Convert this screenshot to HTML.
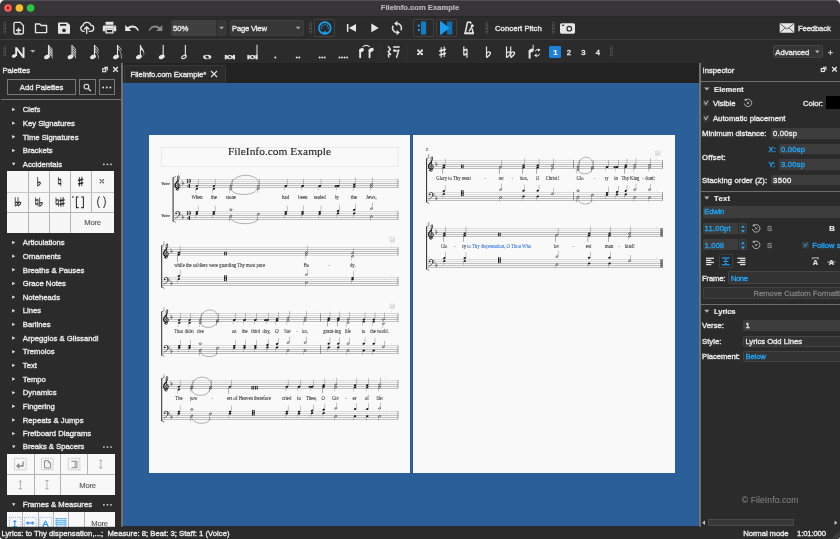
<!DOCTYPE html>
<html lang="en"><head><meta charset="utf-8"><title>FileInfo.com Example</title>
<style>
html,body{margin:0;padding:0;width:840px;height:539px;overflow:hidden;background:#2b2b2b;font-family:'Liberation Sans',sans-serif;}
.b{position:absolute;box-sizing:border-box;}
#ov{position:absolute;left:0;top:0;width:840px;height:539px;will-change:transform;}
#ov text{font-family:'Liberation Sans',sans-serif;white-space:pre;}
#ov text.s{font-family:'Liberation Serif',serif;}
</style></head><body>
<div class="b" style="left:0.00px;top:0.00px;width:840.00px;height:16.20px;background:#373538;border-top:1px solid #514f53;border-radius:5px 5px 0 0;"></div>
<div class="b" style="left:0.00px;top:16.20px;width:840.00px;height:23.20px;background:#2b2b2b;"></div>
<div class="b" style="left:0.00px;top:39.20px;width:840.00px;height:0.90px;background:#3e3e3e;"></div>
<div class="b" style="left:0.00px;top:16.00px;width:840.00px;height:0.70px;background:#272727;"></div>
<div class="b" style="left:0.00px;top:40.00px;width:840.00px;height:23.30px;background:#2b2b2b;"></div>
<div class="b" style="left:170.80px;top:19.80px;width:45.40px;height:16.00px;background:#404040;border-radius:2px 0 0 2px;"></div>
<div class="b" style="left:215.60px;top:19.80px;width:11.40px;height:16.00px;background:#373737;border-radius:0 2px 2px 0;border-left:0.6px solid #2e2e2e;"></div>
<div class="b" style="left:229.60px;top:19.80px;width:74.00px;height:16.00px;background:#373737;border:0.6px solid #3e3e3e;border-radius:2px;"></div>
<div class="b" style="left:314.20px;top:19.20px;width:21.30px;height:17.60px;background:#2a2a2a;border:0.8px solid #414141;border-radius:1px;"></div>
<div class="b" style="left:413.10px;top:19.20px;width:20.80px;height:17.60px;background:#2a2a2a;border:0.8px solid #414141;border-radius:1px;"></div>
<div class="b" style="left:436.10px;top:19.20px;width:20.80px;height:17.60px;background:#2a2a2a;border:0.8px solid #414141;border-radius:1px;"></div>
<div class="b" style="left:380.00px;top:44.50px;width:0.70px;height:14.50px;background:#323232;"></div>
<div class="b" style="left:406.50px;top:44.50px;width:0.70px;height:14.50px;background:#303030;"></div>
<div class="b" style="left:549.20px;top:45.60px;width:12.20px;height:12.20px;background:#1a82d9;border-radius:1px;"></div>
<div class="b" style="left:773.00px;top:45.30px;width:49.60px;height:12.50px;background:#363636;border:0.6px solid #444;border-radius:1.5px;"></div>
<div class="b" style="left:123.20px;top:63.30px;width:575.60px;height:19.30px;background:#222222;"></div>
<div class="b" style="left:123.60px;top:65.40px;width:102.40px;height:17.40px;background:#2b2b2b;border:0.7px solid #3a3a3a;border-bottom:none;border-radius:1.5px 1.5px 0 0;"></div>
<div class="b" style="left:123.20px;top:82.60px;width:575.60px;height:443.60px;background:#2b5f9a;"></div>
<div class="b" style="left:149.20px;top:135.30px;width:261.30px;height:337.70px;background:#f9f9f9;"></div>
<div class="b" style="left:413.40px;top:135.30px;width:262.00px;height:337.70px;background:#f9f9f9;"></div>
<div class="b" style="left:121.00px;top:63.40px;width:1.70px;height:463.20px;background:#707070;"></div>
<div class="b" style="left:699.00px;top:63.40px;width:1.80px;height:463.20px;background:#707070;"></div>
<div class="b" style="left:0.00px;top:63.30px;width:121.00px;height:463.30px;background:#2b2b2b;"></div>
<div class="b" style="left:7.00px;top:79.30px;width:69.00px;height:16.20px;background:#2b2b2b;border:1px solid #787878;"></div>
<div class="b" style="left:79.00px;top:79.30px;width:16.50px;height:16.20px;background:#2b2b2b;border:1px solid #787878;"></div>
<div class="b" style="left:99.00px;top:79.30px;width:15.60px;height:16.20px;background:#2b2b2b;border:1px solid #787878;"></div>
<div class="b" style="left:1.00px;top:98.70px;width:119.50px;height:1.10px;background:#747474;"></div>
<div class="b" style="left:7.20px;top:170.80px;width:107.20px;height:62.20px;background:#f7f7f7;"></div>
<div class="b" style="left:27.85px;top:170.80px;width:0.70px;height:62.20px;background:#b4b4b4;"></div>
<div class="b" style="left:48.85px;top:170.80px;width:0.70px;height:62.20px;background:#b4b4b4;"></div>
<div class="b" style="left:69.85px;top:170.80px;width:0.70px;height:62.20px;background:#b4b4b4;"></div>
<div class="b" style="left:90.85px;top:170.80px;width:0.70px;height:41.50px;background:#b4b4b4;"></div>
<div class="b" style="left:7.20px;top:191.70px;width:107.20px;height:0.80px;background:#c8c8c8;"></div>
<div class="b" style="left:7.20px;top:212.20px;width:107.20px;height:0.70px;background:#b4b4b4;"></div>
<div class="b" style="left:7.00px;top:453.90px;width:107.60px;height:41.40px;background:#f8f8f8;"></div>
<div class="b" style="left:33.85px;top:453.90px;width:0.70px;height:41.40px;background:#b4b4b4;"></div>
<div class="b" style="left:59.85px;top:453.90px;width:0.70px;height:41.40px;background:#b4b4b4;"></div>
<div class="b" style="left:86.95px;top:453.90px;width:0.70px;height:20.60px;background:#b4b4b4;"></div>
<div class="b" style="left:7.00px;top:474.20px;width:107.60px;height:0.70px;background:#b4b4b4;"></div>
<div class="b" style="left:7.00px;top:511.80px;width:107.60px;height:15.00px;background:#f8f8f8;"></div>
<div class="b" style="left:22.10px;top:511.80px;width:0.70px;height:15.00px;background:#b4b4b4;"></div>
<div class="b" style="left:37.55px;top:511.80px;width:0.70px;height:15.00px;background:#b4b4b4;"></div>
<div class="b" style="left:53.00px;top:511.80px;width:0.70px;height:15.00px;background:#b4b4b4;"></div>
<div class="b" style="left:68.45px;top:511.80px;width:0.70px;height:15.00px;background:#b4b4b4;"></div>
<div class="b" style="left:83.90px;top:511.80px;width:0.70px;height:15.00px;background:#b4b4b4;"></div>
<div class="b" style="left:700.80px;top:63.30px;width:139.20px;height:463.30px;background:#2b2b2b;"></div>
<div class="b" style="left:701.00px;top:81.40px;width:139.00px;height:1.00px;background:#6e6e6e;"></div>
<div class="b" style="left:825.70px;top:95.70px;width:14.30px;height:13.30px;background:#000000;"></div>
<div class="b" style="left:770.70px;top:127.90px;width:75.00px;height:10.70px;background:#3d3d3d;border-radius:1.5px;"></div>
<div class="b" style="left:779.00px;top:144.00px;width:66.00px;height:10.30px;background:#3d3d3d;border-radius:1.5px;"></div>
<div class="b" style="left:779.00px;top:159.30px;width:66.00px;height:10.30px;background:#3d3d3d;border-radius:1.5px;"></div>
<div class="b" style="left:770.70px;top:174.70px;width:75.00px;height:10.00px;background:#3d3d3d;border-radius:1.5px;"></div>
<div class="b" style="left:701.00px;top:191.00px;width:139.00px;height:0.90px;background:#6e6e6e;"></div>
<div class="b" style="left:702.90px;top:206.00px;width:143.00px;height:11.70px;background:#3d3d3d;border-radius:1.5px;"></div>
<div class="b" style="left:702.90px;top:222.50px;width:35.00px;height:11.20px;background:#3d3d3d;border-radius:1.5px 0 0 1.5px;"></div>
<div class="b" style="left:739.00px;top:222.50px;width:7.90px;height:11.20px;background:#343434;border:0.6px solid #414141;border-radius:1px;"></div>
<div class="b" style="left:702.90px;top:239.00px;width:35.00px;height:11.20px;background:#3d3d3d;border-radius:1.5px 0 0 1.5px;"></div>
<div class="b" style="left:739.00px;top:239.00px;width:7.90px;height:11.20px;background:#343434;border:0.6px solid #414141;border-radius:1px;"></div>
<div class="b" style="left:718.60px;top:254.30px;width:14.30px;height:13.90px;background:#262626;border:0.7px solid #3f3f3f;border-radius:1px;"></div>
<div class="b" style="left:727.90px;top:271.20px;width:118.00px;height:12.60px;background:#333;border:0.7px solid #444;border-radius:1.5px;"></div>
<div class="b" style="left:702.50px;top:287.30px;width:145.00px;height:11.50px;background:#323232;border:0.7px solid #424242;border-radius:1.5px;"></div>
<div class="b" style="left:701.00px;top:303.60px;width:139.00px;height:0.90px;background:#6e6e6e;"></div>
<div class="b" style="left:743.20px;top:320.40px;width:103.00px;height:10.40px;background:#3d3d3d;border-radius:1.5px;"></div>
<div class="b" style="left:743.20px;top:335.50px;width:103.00px;height:11.40px;background:#333;border:0.7px solid #444;border-radius:1.5px;"></div>
<div class="b" style="left:743.20px;top:350.60px;width:103.00px;height:11.30px;background:#333;border:0.7px solid #444;border-radius:1.5px;"></div>
<div class="b" style="left:701.00px;top:519.00px;width:139.00px;height:7.40px;background:#2b2b2b;"></div>
<div class="b" style="left:707.90px;top:519.30px;width:85.70px;height:6.80px;background:#383838;border:0.6px solid #4a4a4a;"></div>
<svg id="ov" width="840" height="539" viewBox="0 0 840 539">
<path d="M0 0H5A5 5 0 0 0 0 5Z" fill="#fff"/><path d="M840 0H835A5 5 0 0 1 840 5Z" fill="#fff"/>
<circle cx="8" cy="8" r="3.8" fill="#fc5b57"/><circle cx="8" cy="8" r="1.15" fill="#8c0c0a"/>
<circle cx="19.4" cy="8" r="3.8" fill="#fdbc2e"/><circle cx="30.6" cy="8" r="3.8" fill="#28c840"/>
<text x="420.00" y="10.00" font-size="7.6" fill="#b8b6ba" stroke="#b8b6ba" stroke-width="0.18" font-weight="bold" textLength="78.40" text-anchor="middle" >FileInfo.com Example</text>
<g fill="#5e5e5e"><rect x="3.40" y="22.30" width="1.1" height="0.85"/><rect x="5.00" y="22.30" width="1.1" height="0.85"/><rect x="3.40" y="23.75" width="1.1" height="0.85"/><rect x="5.00" y="23.75" width="1.1" height="0.85"/><rect x="3.40" y="25.20" width="1.1" height="0.85"/><rect x="5.00" y="25.20" width="1.1" height="0.85"/><rect x="3.40" y="26.65" width="1.1" height="0.85"/><rect x="5.00" y="26.65" width="1.1" height="0.85"/><rect x="3.40" y="28.10" width="1.1" height="0.85"/><rect x="5.00" y="28.10" width="1.1" height="0.85"/><rect x="3.40" y="29.55" width="1.1" height="0.85"/><rect x="5.00" y="29.55" width="1.1" height="0.85"/><rect x="3.40" y="31.00" width="1.1" height="0.85"/><rect x="5.00" y="31.00" width="1.1" height="0.85"/><rect x="3.40" y="32.45" width="1.1" height="0.85"/><rect x="5.00" y="32.45" width="1.1" height="0.85"/></g>
<g fill="#5e5e5e"><rect x="3.40" y="46.50" width="1.1" height="0.85"/><rect x="5.00" y="46.50" width="1.1" height="0.85"/><rect x="3.40" y="47.95" width="1.1" height="0.85"/><rect x="5.00" y="47.95" width="1.1" height="0.85"/><rect x="3.40" y="49.40" width="1.1" height="0.85"/><rect x="5.00" y="49.40" width="1.1" height="0.85"/><rect x="3.40" y="50.85" width="1.1" height="0.85"/><rect x="5.00" y="50.85" width="1.1" height="0.85"/><rect x="3.40" y="52.30" width="1.1" height="0.85"/><rect x="5.00" y="52.30" width="1.1" height="0.85"/><rect x="3.40" y="53.75" width="1.1" height="0.85"/><rect x="5.00" y="53.75" width="1.1" height="0.85"/><rect x="3.40" y="55.20" width="1.1" height="0.85"/><rect x="5.00" y="55.20" width="1.1" height="0.85"/></g>
<g fill="none" stroke="#e6e6e6" stroke-width="1.35" stroke-linejoin="round"><path d="M15.2 22.4H20.4L23.4 25.6V32.6Q23.4 34 22 34H15.2Q13.9 34 13.9 32.6V23.8Q13.9 22.4 15.2 22.4Z"/><path d="M15.9 30.3H21.2M18.5 27.7V32.9" stroke-width="1.5"/></g>
<path d="M35.5 24H39.8L41.2 25.5H46.6V32.6H35.5Z" fill="none" stroke="#e6e6e6" stroke-width="1.35" stroke-linejoin="round"/>
<path d="M58.8 22.4H67.4L70 25V32.9Q70 33.7 69.2 33.7H58.8Q58 33.7 58 32.9V23.2Q58 22.4 58.8 22.4Z" fill="#e6e6e6"/><rect x="60" y="24" width="6.3" height="1.8" fill="#2b2b2b"/><circle cx="64" cy="30.3" r="1.85" fill="#2b2b2b"/>
<g fill="none" stroke="#e6e6e6" stroke-width="1.3" stroke-linecap="round" stroke-linejoin="round"><path d="M84.2 31.3H83.3A2.9 2.9 0 0 1 83 25.6A4 4 0 0 1 90.7 25.1A3.1 3.1 0 0 1 90.6 31.3H89.2"/><path d="M86.7 33.4V27M84.5 29L86.7 26.8L88.9 29"/></g>
<g fill="#e6e6e6"><rect x="105.6" y="21.8" width="7.8" height="2.9"/><path d="M104 25.4H115Q116.2 25.4 116.2 26.6V31.2H113.6V28.6H105.4V31.2H102.8V26.6Q102.8 25.4 104 25.4Z"/><path d="M105.4 28.6H113.6V33.6H105.4ZM106.8 30V32.3H112.2V30Z" fill-rule="evenodd"/></g><rect x="113.6" y="26.4" width="1" height="0.9" fill="#2b2b2b"/>
<g transform="translate(125.2,0)" fill="#e6e6e6"><path d="M0 24.9V31H6.1L3.9 28.8Q7.2 26.6 10.3 28.2Q11.8 29.1 12.5 31L13.7 30.6Q12.9 27.6 10.4 26.2Q6.3 24.2 2.3 27.2Z"/></g>
<g transform="translate(162.29999999999998,0) scale(-1,1)" fill="#8a8a8a"><path d="M0 24.9V31H6.1L3.9 28.8Q7.2 26.6 10.3 28.2Q11.8 29.1 12.5 31L13.7 30.6Q12.9 27.6 10.4 26.2Q6.3 24.2 2.3 27.2Z"/></g>
<text x="173.00" y="30.70" font-size="7.7" fill="#e8e8e8" stroke="#e8e8e8" stroke-width="0.36" textLength="15.30" >50%</text>
<path d="M219.3 26.7H224L221.65 29.3Z" fill="#b0b0b0"/>
<text x="232.00" y="30.70" font-size="7.7" fill="#e8e8e8" stroke="#e8e8e8" stroke-width="0.36" textLength="35.00" >Page View</text>
<path d="M295.8 26.7H300.4L298.1 29.3Z" fill="#b0b0b0"/>
<g fill="#5e5e5e"><rect x="309.20" y="22.30" width="1.1" height="0.85"/><rect x="310.80" y="22.30" width="1.1" height="0.85"/><rect x="309.20" y="23.75" width="1.1" height="0.85"/><rect x="310.80" y="23.75" width="1.1" height="0.85"/><rect x="309.20" y="25.20" width="1.1" height="0.85"/><rect x="310.80" y="25.20" width="1.1" height="0.85"/><rect x="309.20" y="26.65" width="1.1" height="0.85"/><rect x="310.80" y="26.65" width="1.1" height="0.85"/><rect x="309.20" y="28.10" width="1.1" height="0.85"/><rect x="310.80" y="28.10" width="1.1" height="0.85"/><rect x="309.20" y="29.55" width="1.1" height="0.85"/><rect x="310.80" y="29.55" width="1.1" height="0.85"/><rect x="309.20" y="31.00" width="1.1" height="0.85"/><rect x="310.80" y="31.00" width="1.1" height="0.85"/><rect x="309.20" y="32.45" width="1.1" height="0.85"/><rect x="310.80" y="32.45" width="1.1" height="0.85"/></g>
<g><circle cx="324.85" cy="28" r="5.9" fill="none" stroke="#14a4f4" stroke-width="1.6"/><g fill="#14a4f4"><circle cx="321.4" cy="28" r="0.8"/><circle cx="322.3" cy="25.6" r="0.8"/><circle cx="324.85" cy="24.5" r="0.8"/><circle cx="327.4" cy="25.6" r="0.8"/><circle cx="328.3" cy="28" r="0.8"/><rect x="323.6" y="31.4" width="2.5" height="2.2"/></g></g>
<g fill="#e6e6e6"><rect x="346.9" y="24" width="1.5" height="7.8"/><path d="M356 24V31.8L349 27.9Z"/><path d="M371.3 23.6V32.2L378.7 27.9Z"/></g>
<g fill="none" stroke="#e6e6e6" stroke-width="1.5"><path d="M397.2 23.5A4.5 4.5 0 0 1 400.9 30.25"/><path d="M393.1 25.75A4.5 4.5 0 0 0 396.9 32.5"/></g><g fill="#e6e6e6"><path d="M394.2 23.5L397.4 20.8V26.2Z"/><path d="M399.9 32.6L396.7 29.9V35.3Z"/></g>
<g fill="#1b9df0"><rect x="417.8" y="24.6" width="2.1" height="2"/><rect x="417.8" y="29.1" width="2.1" height="2"/><rect x="421.3" y="21.5" width="1.4" height="13"/></g><rect x="422.7" y="21.5" width="3.4" height="13" fill="#137ec6"/>
<rect x="447" y="21.5" width="5.3" height="13" fill="#0f6eb0"/><g fill="#1b9df0"><rect x="440" y="21.5" width="2" height="13"/><path d="M442 22.3V33.7L449.6 28Z"/></g>
<g fill="none" stroke="#e6e6e6" stroke-linejoin="round"><path d="M467.5 22.3H470.7L473.2 33.3H465.1Z" stroke-width="1.55"/></g><rect x="464.4" y="32.5" width="9.6" height="1.8" fill="#e6e6e6"/><circle cx="472.3" cy="25.7" r="2.5" fill="#2b2b2b"/><path d="M469 31.3L472.2 26" stroke="#e6e6e6" stroke-width="1.4"/><circle cx="472.3" cy="25.7" r="1.55" fill="#e6e6e6"/>
<g fill="#5e5e5e"><rect x="485.40" y="22.30" width="1.1" height="0.85"/><rect x="487.00" y="22.30" width="1.1" height="0.85"/><rect x="485.40" y="23.75" width="1.1" height="0.85"/><rect x="487.00" y="23.75" width="1.1" height="0.85"/><rect x="485.40" y="25.20" width="1.1" height="0.85"/><rect x="487.00" y="25.20" width="1.1" height="0.85"/><rect x="485.40" y="26.65" width="1.1" height="0.85"/><rect x="487.00" y="26.65" width="1.1" height="0.85"/><rect x="485.40" y="28.10" width="1.1" height="0.85"/><rect x="487.00" y="28.10" width="1.1" height="0.85"/><rect x="485.40" y="29.55" width="1.1" height="0.85"/><rect x="487.00" y="29.55" width="1.1" height="0.85"/><rect x="485.40" y="31.00" width="1.1" height="0.85"/><rect x="487.00" y="31.00" width="1.1" height="0.85"/><rect x="485.40" y="32.45" width="1.1" height="0.85"/><rect x="487.00" y="32.45" width="1.1" height="0.85"/></g>
<text x="495.00" y="30.70" font-size="7.7" fill="#e8e8e8" stroke="#e8e8e8" stroke-width="0.36" textLength="46.70" >Concert Pitch</text>
<g fill="#5e5e5e"><rect x="552.00" y="22.30" width="1.1" height="0.85"/><rect x="553.60" y="22.30" width="1.1" height="0.85"/><rect x="552.00" y="23.75" width="1.1" height="0.85"/><rect x="553.60" y="23.75" width="1.1" height="0.85"/><rect x="552.00" y="25.20" width="1.1" height="0.85"/><rect x="553.60" y="25.20" width="1.1" height="0.85"/><rect x="552.00" y="26.65" width="1.1" height="0.85"/><rect x="553.60" y="26.65" width="1.1" height="0.85"/><rect x="552.00" y="28.10" width="1.1" height="0.85"/><rect x="553.60" y="28.10" width="1.1" height="0.85"/><rect x="552.00" y="29.55" width="1.1" height="0.85"/><rect x="553.60" y="29.55" width="1.1" height="0.85"/><rect x="552.00" y="31.00" width="1.1" height="0.85"/><rect x="553.60" y="31.00" width="1.1" height="0.85"/><rect x="552.00" y="32.45" width="1.1" height="0.85"/><rect x="553.60" y="32.45" width="1.1" height="0.85"/></g>
<rect x="560" y="23.2" width="15" height="10.5" rx="1.6" fill="#e6e6e6"/><circle cx="569.3" cy="28.7" r="2.9" fill="#2b2b2b"/><circle cx="569.3" cy="28.7" r="1.7" fill="#e6e6e6"/><rect x="562" y="24.7" width="2.2" height="1.2" fill="#2b2b2b"/>
<rect x="779.7" y="23.2" width="14.6" height="9.6" rx="0.8" fill="#e6e6e6"/><path d="M780.2 23.8L787 29.2L793.8 23.8M780.2 32.4L785.2 27.8M793.8 32.4L788.8 27.8" fill="none" stroke="#2b2b2b" stroke-width="0.7"/>
<text x="798.00" y="30.70" font-size="7.7" fill="#e8e8e8" stroke="#e8e8e8" stroke-width="0.36" textLength="32.80" >Feedback</text>
<g fill="#e6e6e6"><ellipse cx="14" cy="56" rx="2.3" ry="1.75" transform="rotate(-22 14 56)"/><path d="M15.2 47.2H17.1L22.6 54.6V47.2H24.5V58H22.7L17.1 50.5V56H15.2Z"/></g>
<path d="M30.2 50H35.4L32.8 52.8Z" fill="#b0b0b0"/>
<ellipse cx="47.05" cy="56.9" rx="3.1" ry="2.05" fill="#e6e6e6" transform="rotate(-25 47.05 56.9)"/>
<rect x="47.95" y="44.9" width="1.1" height="11.4" fill="#e6e6e6"/>
<path d="M49.05 44.90C49.45 46.90 53.25 47.90 52.65 50.50L51.95 50.50C52.25 49.10 50.45 48.10 49.05 47.10Z" fill="#e6e6e6" opacity="0.85"/>
<path d="M49.05 46.70C49.45 48.70 53.25 49.70 52.65 52.30L51.95 52.30C52.25 50.90 50.45 49.90 49.05 48.90Z" fill="#e6e6e6" opacity="0.85"/>
<path d="M49.05 48.50C49.45 50.50 53.25 51.50 52.65 54.10L51.95 54.10C52.25 52.70 50.45 51.70 49.05 50.70Z" fill="#e6e6e6" opacity="0.85"/>
<path d="M49.05 50.30C49.45 52.30 53.25 53.30 52.65 55.90L51.95 55.90C52.25 54.50 50.45 53.50 49.05 52.50Z" fill="#e6e6e6" opacity="0.85"/>
<path d="M49.05 52.10C49.45 54.10 53.25 55.10 52.65 58.50L51.95 58.50C52.25 56.30 50.45 55.30 49.05 54.30Z" fill="#e6e6e6" opacity="0.85"/>
<ellipse cx="70.55" cy="56.9" rx="3.1" ry="2.05" fill="#e6e6e6" transform="rotate(-25 70.55 56.9)"/>
<rect x="71.45" y="44.9" width="1.1" height="11.4" fill="#e6e6e6"/>
<path d="M72.55 44.90C72.95 46.90 76.75 47.90 76.15 50.50L75.45 50.50C75.75 49.10 73.95 48.10 72.55 47.10Z" fill="#e6e6e6" opacity="0.85"/>
<path d="M72.55 47.30C72.95 49.30 76.75 50.30 76.15 52.90L75.45 52.90C75.75 51.50 73.95 50.50 72.55 49.50Z" fill="#e6e6e6" opacity="0.85"/>
<path d="M72.55 49.70C72.95 51.70 76.75 52.70 76.15 55.30L75.45 55.30C75.75 53.90 73.95 52.90 72.55 51.90Z" fill="#e6e6e6" opacity="0.85"/>
<path d="M72.55 52.10C72.95 54.10 76.75 55.10 76.15 58.50L75.45 58.50C75.75 56.30 73.95 55.30 72.55 54.30Z" fill="#e6e6e6" opacity="0.85"/>
<ellipse cx="93.05" cy="56.9" rx="3.1" ry="2.05" fill="#e6e6e6" transform="rotate(-25 93.05 56.9)"/>
<rect x="93.95" y="44.9" width="1.1" height="11.4" fill="#e6e6e6"/>
<path d="M95.05 44.90C95.45 46.90 99.25 47.90 98.65 50.50L97.95 50.50C98.25 49.10 96.45 48.10 95.05 47.10Z" fill="#e6e6e6" opacity="0.85"/>
<path d="M95.05 47.40C95.45 49.40 99.25 50.40 98.65 53.00L97.95 53.00C98.25 51.60 96.45 50.60 95.05 49.60Z" fill="#e6e6e6" opacity="0.85"/>
<path d="M95.05 49.90C95.45 51.90 99.25 52.90 98.65 58.50L97.95 58.50C98.25 54.10 96.45 53.10 95.05 52.10Z" fill="#e6e6e6" opacity="0.85"/>
<ellipse cx="116.05" cy="56.9" rx="3.1" ry="2.05" fill="#e6e6e6" transform="rotate(-25 116.05 56.9)"/>
<rect x="116.95" y="44.9" width="1.1" height="11.4" fill="#e6e6e6"/>
<path d="M118.05 44.90C118.45 46.90 122.25 47.90 121.65 50.50L120.95 50.50C121.25 49.10 119.45 48.10 118.05 47.10Z" fill="#e6e6e6" opacity="0.85"/>
<path d="M118.05 47.40C118.45 49.40 122.25 50.40 121.65 58.50L120.95 58.50C121.25 51.60 119.45 50.60 118.05 49.60Z" fill="#e6e6e6" opacity="0.85"/>
<ellipse cx="138.95" cy="56.9" rx="3.1" ry="2.05" fill="#e6e6e6" transform="rotate(-25 138.95 56.9)"/>
<rect x="139.85" y="44.9" width="1.1" height="11.4" fill="#e6e6e6"/>
<path d="M140.95 44.9C141.25 48.6 146.15 49.8 143.55 56.6C144.55 52.2 142.75 50.6 140.95 49.6Z" fill="#e6e6e6"/>
<ellipse cx="161.75" cy="56.9" rx="3.1" ry="2.05" fill="#e6e6e6" transform="rotate(-25 161.75 56.9)"/>
<rect x="162.65" y="44.9" width="1.1" height="11.4" fill="#e6e6e6"/>
<ellipse cx="183.95" cy="56.9" rx="2.5" ry="1.4" fill="none" stroke="#e6e6e6" stroke-width="1.1" transform="rotate(-25 183.95 56.9)"/>
<rect x="184.85" y="44.9" width="1.1" height="11.4" fill="#e6e6e6"/>
<ellipse cx="207.2" cy="57.1" rx="4.1" ry="2.25" fill="#e6e6e6"/><ellipse cx="207.2" cy="57.1" rx="1.9" ry="1.35" fill="#2b2b2b" transform="rotate(25 207.2 57.1)"/>
<g fill="#e6e6e6"><rect x="224.8" y="54.9" width="2" height="4.4"/><rect x="233.0" y="54.9" width="2" height="4.4"/><ellipse cx="229.9" cy="57.1" rx="3.3" ry="2.1"/></g><ellipse cx="229.9" cy="57.1" rx="1.35" ry="1.0" fill="#2b2b2b" transform="rotate(25 229.9 57.1)"/>
<g fill="#e6e6e6"><rect x="247.3" y="54.9" width="2" height="4.4"/><rect x="255.5" y="54.9" width="2" height="4.4"/><ellipse cx="252.4" cy="57.1" rx="3.3" ry="2.1"/></g><ellipse cx="252.4" cy="57.1" rx="1.35" ry="1.0" fill="#2b2b2b" transform="rotate(25 252.4 57.1)"/>
<rect x="256.5" y="44.8" width="1" height="14.5" fill="#e6e6e6"/>
<circle cx="275.30" cy="57.4" r="1.0" fill="#e6e6e6"/>
<circle cx="296.73" cy="57.4" r="1.0" fill="#e6e6e6"/>
<circle cx="299.27" cy="57.4" r="1.0" fill="#e6e6e6"/>
<circle cx="319.65" cy="57.4" r="1.0" fill="#e6e6e6"/>
<circle cx="322.20" cy="57.4" r="1.0" fill="#e6e6e6"/>
<circle cx="324.75" cy="57.4" r="1.0" fill="#e6e6e6"/>
<circle cx="339.48" cy="57.4" r="1.0" fill="#e6e6e6"/>
<circle cx="342.03" cy="57.4" r="1.0" fill="#e6e6e6"/>
<circle cx="344.57" cy="57.4" r="1.0" fill="#e6e6e6"/>
<circle cx="347.12" cy="57.4" r="1.0" fill="#e6e6e6"/>
<g fill="#e6e6e6"><rect x="359.2" y="49.2" width="1.9" height="9" rx="0.9"/><ellipse cx="361.6" cy="50" rx="2.5" ry="1.85" transform="rotate(-25 361.6 50)"/><rect x="368.6" y="49.2" width="1.9" height="9" rx="0.9"/><ellipse cx="371.2" cy="50" rx="2.7" ry="1.9" transform="rotate(-25 371.2 50)"/></g><path d="M362.6 46.9Q366.2 43.9 369.8 46.9" fill="none" stroke="#e6e6e6" stroke-width="1.05"/>
<g fill="none" stroke="#e6e6e6" stroke-linecap="round" stroke-linejoin="round"><path d="M388.4 46.8L390.4 49.4L388.2 51.8L390.6 54.4Q387.4 53.6 388.8 57" stroke-width="1.5"/><path d="M393.6 47H399.2" stroke-width="1.5"/><path d="M394 50.6Q396.2 51.6 398.8 50L396.6 57.3" stroke-width="1.4"/></g><circle cx="394.5" cy="50.5" r="1.25" fill="#e6e6e6"/>
<g stroke="#e6e6e6" stroke-width="1.4"><path d="M418 50.2L422.2 54.4M422.2 50.2L418 54.4"/></g><g fill="#e6e6e6"><rect x="417.3" y="49.5" width="2" height="2"/><rect x="420.9" y="49.5" width="2" height="2"/><rect x="417.3" y="53.1" width="2" height="2"/><rect x="420.9" y="53.1" width="2" height="2"/></g>
<g stroke="#e6e6e6" fill="none"><path d="M441.2 47.2V57.7M444.2 46.5V57" stroke-width="1.15"/><path d="M439.3 51.1L446 49.3M439.3 55L446 53.2" stroke-width="1.7"/></g>
<g stroke="#e6e6e6" fill="none"><path d="M463.8 46.5V55.3M467 49V57.8" stroke-width="1.2"/><path d="M463.7 50.4L467 49.3M463.7 55L467 53.9" stroke-width="1.7"/></g>
<g transform="translate(486,0)"><path d="M0.5 46.5V57.6" stroke="#e6e6e6" stroke-width="1.2" fill="none"/><path d="M0.5 53.2Q2.6 51.1 4.2 52.4Q5.3 54.2 0.5 57.6" fill="none" stroke="#e6e6e6" stroke-width="1.4"/></g>
<g transform="translate(506,0)"><path d="M0.5 46.5V57.6" stroke="#e6e6e6" stroke-width="1.2" fill="none"/><path d="M0.5 53.2Q2.6 51.1 4.2 52.4Q5.3 54.2 0.5 57.6" fill="none" stroke="#e6e6e6" stroke-width="1.4"/></g>
<g transform="translate(510.2,0)"><path d="M0.5 46.5V57.6" stroke="#e6e6e6" stroke-width="1.2" fill="none"/><path d="M0.5 53.2Q2.6 51.1 4.2 52.4Q5.3 54.2 0.5 57.6" fill="none" stroke="#e6e6e6" stroke-width="1.4"/></g>
<g fill="#e6e6e6"><rect x="528.6" y="50" width="2" height="8.8" rx="0.8"/><ellipse cx="531.2" cy="50.6" rx="2.5" ry="1.8" transform="rotate(-22 531.2 50.6)"/><rect x="532.7" y="44.8" width="0.95" height="6"/></g><g fill="none" stroke="#e6e6e6" stroke-width="1"><path d="M539.3 50.2A2.6 2.6 0 0 0 535.2 51.4"/><path d="M535.3 55.2A2.6 2.6 0 0 0 539.6 53.8"/></g><g fill="#e6e6e6"><path d="M537.6 48.4L540.6 49.6L538.2 51.8Z"/><path d="M537 57L534 55.8L536.4 53.6Z"/></g>
<text x="555.30" y="54.70" font-size="7.7" fill="#ffffff" stroke="#ffffff" stroke-width="0.18" font-weight="bold" text-anchor="middle" >1</text>
<text x="568.80" y="54.70" font-size="7.7" fill="#e8e8e8" stroke="#e8e8e8" stroke-width="0.36" text-anchor="middle" >2</text>
<text x="583.40" y="54.70" font-size="7.7" fill="#e8e8e8" stroke="#e8e8e8" stroke-width="0.36" text-anchor="middle" >3</text>
<text x="598.00" y="54.70" font-size="7.7" fill="#e8e8e8" stroke="#e8e8e8" stroke-width="0.36" text-anchor="middle" >4</text>
<g fill="#5e5e5e"><rect x="610.00" y="46.50" width="1.1" height="0.85"/><rect x="611.60" y="46.50" width="1.1" height="0.85"/><rect x="610.00" y="47.95" width="1.1" height="0.85"/><rect x="611.60" y="47.95" width="1.1" height="0.85"/><rect x="610.00" y="49.40" width="1.1" height="0.85"/><rect x="611.60" y="49.40" width="1.1" height="0.85"/><rect x="610.00" y="50.85" width="1.1" height="0.85"/><rect x="611.60" y="50.85" width="1.1" height="0.85"/><rect x="610.00" y="52.30" width="1.1" height="0.85"/><rect x="611.60" y="52.30" width="1.1" height="0.85"/><rect x="610.00" y="53.75" width="1.1" height="0.85"/><rect x="611.60" y="53.75" width="1.1" height="0.85"/><rect x="610.00" y="55.20" width="1.1" height="0.85"/><rect x="611.60" y="55.20" width="1.1" height="0.85"/></g>
<text x="775.30" y="54.80" font-size="7.7" fill="#e8e8e8" stroke="#e8e8e8" stroke-width="0.36" textLength="33.90" >Advanced</text>
<path d="M815 50.6H819.6L817.3 53.2Z" fill="#b0b0b0"/>
<path d="M828 52.7H832.8M830.4 50.3V55.1" stroke="#e6e6e6" stroke-width="0.9"/>
<text x="130.50" y="76.70" font-size="7.7" fill="#e8e8e8" stroke="#e8e8e8" stroke-width="0.36" textLength="75.80" >FileInfo.com Example*</text>
<path d="M211 71L217 77M217 71L211 77" stroke="#e6e6e6" stroke-width="1.1"/>
<text x="2.50" y="72.70" font-size="7.7" fill="#e8e8e8" stroke="#e8e8e8" stroke-width="0.36" textLength="27.50" >Palettes</text>
<g fill="none" stroke="#e6e6e6" stroke-width="1.15"><path d="M104.30000000000001 67.39999999999999H107.30000000000001V70.39999999999999"/><rect x="102.7" y="68.7" width="3" height="3"/></g>
<path d="M113.2 67.1L117.8 71.69999999999999M117.8 67.1L113.2 71.69999999999999" stroke="#e6e6e6" stroke-width="1.35"/>
<text x="41.50" y="90.30" font-size="7.7" fill="#e8e8e8" stroke="#e8e8e8" stroke-width="0.36" textLength="43.50" text-anchor="middle" >Add Palettes</text>
<circle cx="86.4" cy="86.6" r="2.4" fill="none" stroke="#e6e6e6" stroke-width="1.1"/><path d="M88.2 88.4L90.7 91" stroke="#e6e6e6" stroke-width="1.3"/>
<g fill="#e6e6e6"><circle cx="103.2" cy="87.5" r="0.9"/><circle cx="106.8" cy="87.5" r="0.9"/><circle cx="110.4" cy="87.5" r="0.9"/></g>
<path d="M12.2 107.80V111.20L15.2 109.50Z" fill="#e6e6e6"/>
<text x="22.80" y="112.20" font-size="7.7" fill="#e8e8e8" stroke="#e8e8e8" stroke-width="0.36" >Clefs</text>
<path d="M12.2 121.45V124.85L15.2 123.15Z" fill="#e6e6e6"/>
<text x="22.80" y="125.85" font-size="7.7" fill="#e8e8e8" stroke="#e8e8e8" stroke-width="0.36" >Key Signatures</text>
<path d="M12.2 135.10V138.50L15.2 136.80Z" fill="#e6e6e6"/>
<text x="22.80" y="139.50" font-size="7.7" fill="#e8e8e8" stroke="#e8e8e8" stroke-width="0.36" >Time Signatures</text>
<path d="M12.2 148.75V152.15L15.2 150.45Z" fill="#e6e6e6"/>
<text x="22.80" y="153.15" font-size="7.7" fill="#e8e8e8" stroke="#e8e8e8" stroke-width="0.36" >Brackets</text>
<path d="M12 162.80H15.4L13.7 165.60Z" fill="#e6e6e6"/>
<text x="22.80" y="166.70" font-size="7.7" fill="#e8e8e8" stroke="#e8e8e8" stroke-width="0.36" >Accidentals</text>
<g fill="#e6e6e6"><circle cx="103.90" cy="164.30" r="0.85"/><circle cx="107.45" cy="164.30" r="0.85"/><circle cx="111.00" cy="164.30" r="0.85"/></g>
<path d="M12.2 240.80V244.20L15.2 242.50Z" fill="#e6e6e6"/>
<text x="22.80" y="245.20" font-size="7.7" fill="#e8e8e8" stroke="#e8e8e8" stroke-width="0.36" >Articulations</text>
<path d="M12.2 254.45V257.85L15.2 256.15Z" fill="#e6e6e6"/>
<text x="22.80" y="258.85" font-size="7.7" fill="#e8e8e8" stroke="#e8e8e8" stroke-width="0.36" >Ornaments</text>
<path d="M12.2 268.10V271.50L15.2 269.80Z" fill="#e6e6e6"/>
<text x="22.80" y="272.50" font-size="7.7" fill="#e8e8e8" stroke="#e8e8e8" stroke-width="0.36" >Breaths &amp; Pauses</text>
<path d="M12.2 281.75V285.15L15.2 283.45Z" fill="#e6e6e6"/>
<text x="22.80" y="286.15" font-size="7.7" fill="#e8e8e8" stroke="#e8e8e8" stroke-width="0.36" >Grace Notes</text>
<path d="M12.2 295.40V298.80L15.2 297.10Z" fill="#e6e6e6"/>
<text x="22.80" y="299.80" font-size="7.7" fill="#e8e8e8" stroke="#e8e8e8" stroke-width="0.36" >Noteheads</text>
<path d="M12.2 309.05V312.45L15.2 310.75Z" fill="#e6e6e6"/>
<text x="22.80" y="313.45" font-size="7.7" fill="#e8e8e8" stroke="#e8e8e8" stroke-width="0.36" >Lines</text>
<path d="M12.2 322.70V326.10L15.2 324.40Z" fill="#e6e6e6"/>
<text x="22.80" y="327.10" font-size="7.7" fill="#e8e8e8" stroke="#e8e8e8" stroke-width="0.36" >Barlines</text>
<path d="M12.2 336.35V339.75L15.2 338.05Z" fill="#e6e6e6"/>
<text x="22.80" y="340.75" font-size="7.7" fill="#e8e8e8" stroke="#e8e8e8" stroke-width="0.36" >Arpeggios &amp; Glissandi</text>
<path d="M12.2 350.00V353.40L15.2 351.70Z" fill="#e6e6e6"/>
<text x="22.80" y="354.40" font-size="7.7" fill="#e8e8e8" stroke="#e8e8e8" stroke-width="0.36" >Tremolos</text>
<path d="M12.2 363.65V367.05L15.2 365.35Z" fill="#e6e6e6"/>
<text x="22.80" y="368.05" font-size="7.7" fill="#e8e8e8" stroke="#e8e8e8" stroke-width="0.36" >Text</text>
<path d="M12.2 377.30V380.70L15.2 379.00Z" fill="#e6e6e6"/>
<text x="22.80" y="381.70" font-size="7.7" fill="#e8e8e8" stroke="#e8e8e8" stroke-width="0.36" >Tempo</text>
<path d="M12.2 390.95V394.35L15.2 392.65Z" fill="#e6e6e6"/>
<text x="22.80" y="395.35" font-size="7.7" fill="#e8e8e8" stroke="#e8e8e8" stroke-width="0.36" >Dynamics</text>
<path d="M12.2 404.60V408.00L15.2 406.30Z" fill="#e6e6e6"/>
<text x="22.80" y="409.00" font-size="7.7" fill="#e8e8e8" stroke="#e8e8e8" stroke-width="0.36" >Fingering</text>
<path d="M12.2 418.25V421.65L15.2 419.95Z" fill="#e6e6e6"/>
<text x="22.80" y="422.65" font-size="7.7" fill="#e8e8e8" stroke="#e8e8e8" stroke-width="0.36" >Repeats &amp; Jumps</text>
<path d="M12.2 431.90V435.30L15.2 433.60Z" fill="#e6e6e6"/>
<text x="22.80" y="436.30" font-size="7.7" fill="#e8e8e8" stroke="#e8e8e8" stroke-width="0.36" >Fretboard Diagrams</text>
<path d="M12 445.50H15.4L13.7 448.30Z" fill="#e6e6e6"/>
<text x="22.80" y="449.40" font-size="7.7" fill="#e8e8e8" stroke="#e8e8e8" stroke-width="0.36" >Breaks &amp; Spacers</text>
<g fill="#e6e6e6"><circle cx="103.90" cy="447.00" r="0.85"/><circle cx="107.45" cy="447.00" r="0.85"/><circle cx="111.00" cy="447.00" r="0.85"/></g>
<path d="M12 503.30H15.4L13.7 506.10Z" fill="#e6e6e6"/>
<text x="22.80" y="507.20" font-size="7.7" fill="#e8e8e8" stroke="#e8e8e8" stroke-width="0.36" >Frames &amp; Measures</text>
<g fill="#e6e6e6"><circle cx="103.90" cy="504.80" r="0.85"/><circle cx="107.45" cy="504.80" r="0.85"/><circle cx="111.00" cy="504.80" r="0.85"/></g>
<g transform="translate(38.8,182.3) scale(1.15)"><path d="M-1 -4.4V3.3" stroke="#2a2a2a" stroke-width="0.7" fill="none"/><path d="M-1 0.6Q0.3 -0.6 1.2 0.1Q1.9 1.2 -1 3.3" fill="none" stroke="#2a2a2a" stroke-width="0.9"/></g>
<g transform="translate(59.6,181.6) scale(1.2)" stroke="#2a2a2a" fill="none"><path d="M-1 -3.8V2M1 -2V3.8" stroke-width="0.65"/><path d="M-1 -1.4L1 -2M-1 2L1 1.4" stroke-width="1.2"/></g>
<g transform="translate(80.6,181.6) scale(1.3)" stroke="#2a2a2a" fill="none"><path d="M-0.9 -3.4V3.8M0.9 -3.8V3.4" stroke-width="0.65"/><path d="M-2 -0.8L2 -1.8M-2 1.9L2 0.9" stroke-width="1.2"/></g>
<g transform="translate(101.8,181.3)" stroke="#2a2a2a"><path d="M-1.5 -1.5L1.5 1.5M1.5 -1.5L-1.5 1.5" stroke-width="0.6"/></g><g fill="#2a2a2a" transform="translate(101.8,181.3)"><rect x="-2" y="-2" width="1.2" height="1.2"/><rect x="0.8" y="-2" width="1.2" height="1.2"/><rect x="-2" y="0.8" width="1.2" height="1.2"/><rect x="0.8" y="0.8" width="1.2" height="1.2"/></g>
<g transform="translate(16.4,202.3) scale(1.15)"><path d="M-1 -4.4V3.3" stroke="#2a2a2a" stroke-width="0.7" fill="none"/><path d="M-1 0.6Q0.3 -0.6 1.2 0.1Q1.9 1.2 -1 3.3" fill="none" stroke="#2a2a2a" stroke-width="0.9"/></g>
<g transform="translate(19.2,202.3) scale(1.15)"><path d="M-1 -4.4V3.3" stroke="#2a2a2a" stroke-width="0.7" fill="none"/><path d="M-1 0.6Q0.3 -0.6 1.2 0.1Q1.9 1.2 -1 3.3" fill="none" stroke="#2a2a2a" stroke-width="0.9"/></g>
<g transform="translate(36.8,202) scale(1.2)" stroke="#2a2a2a" fill="none"><path d="M-1 -3.8V2M1 -2V3.8" stroke-width="0.65"/><path d="M-1 -1.4L1 -2M-1 2L1 1.4" stroke-width="1.2"/></g>
<g transform="translate(40.8,202.6) scale(1.15)"><path d="M-1 -4.4V3.3" stroke="#2a2a2a" stroke-width="0.7" fill="none"/><path d="M-1 0.6Q0.3 -0.6 1.2 0.1Q1.9 1.2 -1 3.3" fill="none" stroke="#2a2a2a" stroke-width="0.9"/></g>
<g transform="translate(57.2,202) scale(1.2)" stroke="#2a2a2a" fill="none"><path d="M-1 -3.8V2M1 -2V3.8" stroke-width="0.65"/><path d="M-1 -1.4L1 -2M-1 2L1 1.4" stroke-width="1.2"/></g>
<g transform="translate(62,202) scale(1.3)" stroke="#2a2a2a" fill="none"><path d="M-0.9 -3.4V3.8M0.9 -3.8V3.4" stroke-width="0.65"/><path d="M-2 -0.8L2 -1.8M-2 1.9L2 0.9" stroke-width="1.2"/></g>
<g fill="none" stroke="#2a2a2a" stroke-width="1.05"><path d="M78.6 196.9H76.4V207.6H78.6M81.2 196.9H83.4V207.6H81.2"/></g><rect x="72.2" y="196.3" width="1.4" height="1.4" fill="#2a2a2a"/>
<g fill="none" stroke="#2a2a2a" stroke-width="1"><path d="M99.4 196.4Q95.8 202.2 99.4 208M103.6 196.4Q107.2 202.2 103.6 208"/></g>
<text x="92.70" y="225.00" font-size="7.7" fill="#505050" stroke="#505050" stroke-width="0.1" textLength="16.70" text-anchor="middle" >More</text>
<rect x="14.5" y="458.3" width="11.5" height="11.5" fill="none" stroke="#8e8e8e" stroke-width="0.65" stroke-dasharray="0.9 0.8"/>
<path d="M23 461.5V466H17.3M19.3 463.8L17 466L19.3 468.2" fill="none" stroke="#8a8a8a" stroke-width="1.35"/>
<rect x="41.5" y="458.3" width="11.5" height="11.5" fill="none" stroke="#8e8e8e" stroke-width="0.65" stroke-dasharray="0.9 0.8"/>
<path d="M44.5 460.7H48.6L50.6 462.7V468H44.5Z" fill="#f2f2f2" stroke="#8a8a8a" stroke-width="1"/><path d="M48.4 460.9V462.9H50.4" fill="none" stroke="#8a8a8a" stroke-width="0.7"/>
<rect x="68.3" y="458.3" width="11.5" height="11.5" fill="none" stroke="#8e8e8e" stroke-width="0.65" stroke-dasharray="0.9 0.8"/>
<path d="M71.4 461.2H77V467.7H71.4" fill="none" stroke="#8a8a8a" stroke-width="1"/><path d="M75.2 461.2V467.7" stroke="#8a8a8a" stroke-width="0.9"/>
<path d="M100.8 460.3V468.6" stroke="#8a8a8a" stroke-width="0.6" fill="none"/><path d="M99.2 460.3H102.39999999999999" stroke="#8a8a8a" stroke-width="0.7"/><path d="M99.3 466.8L100.8 468.6L102.3 466.8" stroke="#8a8a8a" stroke-width="0.6" fill="none"/>
<path d="M20.4 480.6V488.8" stroke="#8a8a8a" stroke-width="0.6" fill="none"/><path d="M18.9 482.40000000000003L20.4 480.6L21.9 482.40000000000003" stroke="#8a8a8a" stroke-width="0.6" fill="none"/><path d="M18.799999999999997 488.8H22.0" stroke="#8a8a8a" stroke-width="0.7"/>
<path d="M47 480.6V488.8" stroke="#8a8a8a" stroke-width="0.6" fill="none"/><path d="M45.4 480.6H48.6" stroke="#8a8a8a" stroke-width="0.7"/><path d="M45.4 488.8H48.6" stroke="#8a8a8a" stroke-width="0.7"/>
<text x="87.60" y="488.20" font-size="7.7" fill="#505050" stroke="#505050" stroke-width="0.1" textLength="16.70" text-anchor="middle" >More</text>
<rect x="9.4" y="517.4" width="11.6" height="10" fill="none" stroke="#4a8fe0" stroke-width="0.7" stroke-dasharray="0.8 1.1"/>
<path d="M14.8 520.6V527" stroke="#3d8ee6" stroke-width="1.1" fill="none"/><path d="M12.7 521.9L14.8 519.9L16.9 521.9Z" fill="#3d8ee6"/><path d="M12.6 526.6H17" stroke="#3d8ee6" stroke-width="0.9"/>
<rect x="24.4" y="517.4" width="11.6" height="10" fill="none" stroke="#4a8fe0" stroke-width="0.7" stroke-dasharray="0.8 1.1"/>
<path d="M27.4 523H33" stroke="#3d8ee6" stroke-width="1.3" fill="none"/><path d="M25.7 523L28.3 521.1V524.9ZM34.5 523L31.9 521.1V524.9Z" fill="#3d8ee6"/>
<rect x="39.8" y="517.4" width="11.8" height="10" fill="none" stroke="#4a8fe0" stroke-width="0.7" stroke-dasharray="0.8 1.1"/>
<text x="45.50" y="527.40" font-size="9.6" fill="#2a9df4" stroke="#2a9df4" stroke-width="0.45" text-anchor="middle" >A</text>
<rect x="56.3" y="518.4" width="9.1" height="8.6" fill="#cfe6fb"/><g stroke="#45aaf2" fill="none"><path d="M55 518.5H66.8M55 520.6H66.8M55 522.6H66.8M55 524.4H66.8" stroke-width="0.7"/><path d="M56.4 518V527M65.3 518V527" stroke-width="0.6"/></g>
<text x="99.60" y="526.30" font-size="7.7" fill="#505050" stroke="#505050" stroke-width="0.1" textLength="16.70" text-anchor="middle" >More</text>
<text x="702.50" y="72.60" font-size="7.7" fill="#e8e8e8" stroke="#e8e8e8" stroke-width="0.36" textLength="31.80" >Inspector</text>
<g fill="none" stroke="#e6e6e6" stroke-width="1.15"><path d="M822.9 67.19999999999999H825.9V70.19999999999999"/><rect x="821.3" y="68.5" width="3" height="3"/></g>
<path d="M832.2 66.9L836.8000000000001 71.5M836.8000000000001 66.9L832.2 71.5" stroke="#e6e6e6" stroke-width="1.35"/>
<path d="M704.2 87.50H709.4L706.8 90.50Z" fill="#b4b4b4"/>
<text x="714.10" y="91.80" font-size="7.7" fill="#eaeaea" stroke="#eaeaea" stroke-width="0.18" font-weight="bold" textLength="29.50" >Element</text>
<rect x="703.3" y="100.1" width="5.6" height="5.8" fill="#3a3a3a" stroke="#474747" stroke-width="0.4"/><path d="M704.4 101.5L705.6999999999999 104.69999999999999L708.0999999999999 100.69999999999999" fill="none" stroke="#d8d8d8" stroke-width="0.85"/>
<text x="712.90" y="105.50" font-size="7.7" fill="#e8e8e8" stroke="#e8e8e8" stroke-width="0.36" textLength="22.60" >Visible</text>
<g fill="none" stroke="#b6b6b6"><path d="M745.60 100.00A3.75 3.75 0 1 1 744.30 103.50" stroke-width="0.95"/><path d="M746.80 101.70L749.30 104.20M749.30 101.70L746.80 104.20" stroke-width="0.8"/></g><path d="M743.80 99.80L746.50 98.50L746.30 101.30Z" fill="#b6b6b6"/>
<text x="803.00" y="105.50" font-size="7.7" fill="#e8e8e8" stroke="#e8e8e8" stroke-width="0.36" textLength="20.00" >Color:</text>
<rect x="703.3" y="115.3" width="5.6" height="5.8" fill="#3a3a3a" stroke="#474747" stroke-width="0.4"/><path d="M704.4 116.7L705.6999999999999 119.89999999999999L708.0999999999999 115.89999999999999" fill="none" stroke="#d8d8d8" stroke-width="0.85"/>
<text x="712.90" y="120.70" font-size="7.7" fill="#e8e8e8" stroke="#e8e8e8" stroke-width="0.36" textLength="72.60" >Automatic placement</text>
<text x="702.10" y="135.90" font-size="7.7" fill="#e8e8e8" stroke="#e8e8e8" stroke-width="0.36" textLength="64.30" >Minimum distance:</text>
<text x="773.00" y="135.90" font-size="7.7" fill="#e8e8e8" stroke="#e8e8e8" stroke-width="0.36" textLength="24.00" >0.00sp</text>
<text x="702.10" y="159.60" font-size="7.7" fill="#e8e8e8" stroke="#e8e8e8" stroke-width="0.36" textLength="23.60" >Offset:</text>
<text x="768.60" y="151.60" font-size="7.7" fill="#22a2f4" stroke="#22a2f4" stroke-width="0.36" textLength="7.40" >X:</text>
<text x="781.00" y="151.60" font-size="7.7" fill="#22a2f4" stroke="#22a2f4" stroke-width="0.36" textLength="24.00" >0.00sp</text>
<text x="768.60" y="166.80" font-size="7.7" fill="#22a2f4" stroke="#22a2f4" stroke-width="0.36" textLength="6.60" >Y:</text>
<text x="781.00" y="166.80" font-size="7.7" fill="#22a2f4" stroke="#22a2f4" stroke-width="0.36" textLength="24.00" >3.00sp</text>
<text x="702.10" y="182.50" font-size="7.7" fill="#e8e8e8" stroke="#e8e8e8" stroke-width="0.36" textLength="65.00" >Stacking order (Z):</text>
<text x="773.00" y="182.50" font-size="7.7" fill="#e8e8e8" stroke="#e8e8e8" stroke-width="0.36" textLength="18.40" >3500</text>
<path d="M704.2 196.40H709.4L706.8 199.40Z" fill="#b4b4b4"/>
<text x="714.10" y="200.70" font-size="7.7" fill="#eaeaea" stroke="#eaeaea" stroke-width="0.18" font-weight="bold" textLength="16.00" >Text</text>
<text x="704.30" y="214.00" font-size="7.7" fill="#22a2f4" stroke="#22a2f4" stroke-width="0.36" textLength="20.00" >Edwin</text>
<text x="704.60" y="231.00" font-size="7.7" fill="#22a2f4" stroke="#22a2f4" stroke-width="0.36" textLength="26.10" >11.00pt</text>
<path d="M740.9 227.80L742.95 225.00L745 227.80ZM740.9 230.00L742.95 232.70L745 230.00Z" fill="#1ea5ea"/>
<g fill="none" stroke="#b6b6b6"><path d="M753.80 225.50A3.75 3.75 0 1 1 752.50 229.00" stroke-width="0.95"/><path d="M755.00 227.20L757.50 229.70M757.50 227.20L755.00 229.70" stroke-width="0.8"/></g><path d="M752.00 225.30L754.70 224.00L754.50 226.80Z" fill="#b6b6b6"/>
<text x="767.10" y="231.00" font-size="7.7" fill="#8a8a8a" stroke="#8a8a8a" stroke-width="0.36" >S</text>
<text x="829.30" y="231.00" font-size="7.7" fill="#eaeaea" stroke="#eaeaea" stroke-width="0.18" font-weight="bold" >B</text>
<text x="704.60" y="247.50" font-size="7.7" fill="#22a2f4" stroke="#22a2f4" stroke-width="0.36" textLength="19.00" >1.00li</text>
<path d="M740.9 244.30L742.95 241.50L745 244.30ZM740.9 246.50L742.95 249.20L745 246.50Z" fill="#1ea5ea"/>
<g fill="none" stroke="#b6b6b6"><path d="M753.80 242.00A3.75 3.75 0 1 1 752.50 245.50" stroke-width="0.95"/><path d="M755.00 243.70L757.50 246.20M757.50 243.70L755.00 246.20" stroke-width="0.8"/></g><path d="M752.00 241.80L754.70 240.50L754.50 243.30Z" fill="#b6b6b6"/>
<text x="767.10" y="247.60" font-size="7.7" fill="#8a8a8a" stroke="#8a8a8a" stroke-width="0.36" >S</text>
<rect x="802.8" y="242.2" width="5.6" height="5.8" fill="#3a3a3a" stroke="#474747" stroke-width="0.4"/><path d="M803.9 243.6L805.1999999999999 246.79999999999998L807.5999999999999 242.79999999999998" fill="none" stroke="#22a2f4" stroke-width="0.85"/>
<text x="812.30" y="248.00" font-size="7.7" fill="#22a2f4" stroke="#22a2f4" stroke-width="0.36" >Follow staff size</text>
<rect x="706.00" y="257.60" width="8" height="1.3" fill="#e0e0e0"/><rect x="706.00" y="259.70" width="5.4" height="1.3" fill="#e0e0e0"/><rect x="706.00" y="261.80" width="8" height="1.3" fill="#e0e0e0"/><rect x="706.00" y="263.90" width="5.4" height="1.3" fill="#e0e0e0"/>
<g fill="#22a2f4"><rect x="721.8" y="257.4" width="8" height="1.2"/><rect x="721.8" y="264.2" width="8" height="1.2"/><rect x="723.2" y="260.8" width="5.2" height="1.2"/><path d="M724.6 258.9H727L725.8 260.5ZM724.6 263.9H727L725.8 262.3Z"/></g>
<rect x="737.40" y="257.60" width="8" height="1.3" fill="#e0e0e0"/><rect x="740.00" y="259.70" width="5.4" height="1.3" fill="#e0e0e0"/><rect x="737.40" y="261.80" width="8" height="1.3" fill="#e0e0e0"/><rect x="740.00" y="263.90" width="5.4" height="1.3" fill="#e0e0e0"/>
<text x="815.40" y="265.00" font-size="7.4" fill="#e0e0e0" stroke="#e0e0e0" stroke-width="0.18" font-weight="bold" text-anchor="middle" >A</text>
<path d="M811.8 257.9H819M812.4 259.4L813.4 258.2M818.4 259.4L817.4 258.2" stroke="#e0e0e0" stroke-width="0.8"/>
<text x="831.40" y="265.20" font-size="7.4" fill="#e0e0e0" stroke="#e0e0e0" stroke-width="0.18" font-weight="bold" text-anchor="middle" >A</text>
<path d="M827.4 262H835.4" stroke="#e0e0e0" stroke-width="0.8"/>
<text x="702.10" y="280.70" font-size="7.7" fill="#e8e8e8" stroke="#e8e8e8" stroke-width="0.36" textLength="23.30" >Frame:</text>
<text x="730.70" y="280.70" font-size="7.7" fill="#22a2f4" stroke="#22a2f4" stroke-width="0.36" textLength="17.30" >None</text>
<text x="753.40" y="295.80" font-size="7.7" fill="#7c7c7c" stroke="#7c7c7c" stroke-width="0.36" >Remove Custom Formatting</text>
<path d="M704.2 309.70H709.4L706.8 312.70Z" fill="#b4b4b4"/>
<text x="714.10" y="314.00" font-size="7.7" fill="#eaeaea" stroke="#eaeaea" stroke-width="0.18" font-weight="bold" textLength="21.40" >Lyrics</text>
<text x="702.10" y="328.40" font-size="7.7" fill="#e8e8e8" stroke="#e8e8e8" stroke-width="0.36" textLength="21.90" >Verse:</text>
<text x="745.40" y="328.40" font-size="7.7" fill="#e8e8e8" stroke="#e8e8e8" stroke-width="0.36" >1</text>
<text x="702.10" y="343.60" font-size="7.7" fill="#e8e8e8" stroke="#e8e8e8" stroke-width="0.36" textLength="19.20" >Style:</text>
<text x="745.40" y="343.60" font-size="7.7" fill="#e8e8e8" stroke="#e8e8e8" stroke-width="0.36" textLength="56.60" >Lyrics Odd Lines</text>
<text x="702.10" y="358.80" font-size="7.7" fill="#e8e8e8" stroke="#e8e8e8" stroke-width="0.36" textLength="37.90" >Placement:</text>
<text x="745.40" y="358.80" font-size="7.7" fill="#22a2f4" stroke="#22a2f4" stroke-width="0.36" textLength="20.50" >Below</text>
<text x="741.80" y="502.70" font-size="8.6" fill="#808080" stroke="#808080" stroke-width="0.08" textLength="56.60" >© FileInfo.com</text>
<path d="M705 520.6V525L702.2 522.8Z" fill="#c8c8c8"/><path d="M834.6 520.6V525L837.4 522.8Z" fill="#c8c8c8"/>
<g id="score"><rect x="161.2" y="147.2" width="236.8" height="19" fill="none" stroke="#d9d9d9" stroke-width="0.5"/><text x="279.5" y="155" font-size="11.4" fill="#1c1c1c" stroke="#1c1c1c" stroke-width="0.12" class="s" text-anchor="middle" textLength="103">FileInfo.com Example</text><path d="M173.70 179.15H398.00v0.4H173.70ZM173.70 181.20H398.00v0.4H173.70ZM173.70 183.25H398.00v0.4H173.70ZM173.70 185.30H398.00v0.4H173.70ZM173.70 187.35H398.00v0.4H173.70Z" fill="#858585"/><path d="M173.70 211.15H398.00v0.4H173.70ZM173.70 213.20H398.00v0.4H173.70ZM173.70 215.25H398.00v0.4H173.70ZM173.70 217.30H398.00v0.4H173.70ZM173.70 219.35H398.00v0.4H173.70Z" fill="#858585"/><rect x="172.60" y="177.75" width="1" height="43.40" fill="#2a2a2a"/><path d="M172.60 177.95Q174.50 177.55 175.70 176.35M172.60 220.95Q174.50 221.35 175.70 222.55" stroke="#1a1a1a" stroke-width="0.6" fill="none"/><rect x="397.80" y="179.35" width="0.40" height="8.20" fill="#1a1a1a"/><rect x="397.80" y="211.35" width="0.40" height="8.20" fill="#1a1a1a"/><g transform="translate(174.60,178.80) scale(1.1)" fill="none" stroke="#1a1a1a" stroke-linecap="round" stroke-linejoin="round"><path d="M1.4 9.3C1.4 10.9 3.9 11 3.8 9.2L2.7 -0.4C2.5 -2.3 3.4 -3.1 3.8 -2.7C4.4 -1.6 4.1 0.3 3.1 1.6C1.7 3.3 0.3 4.5 0.4 6.2C0.5 7.9 2 8.7 3.2 8.5C4.9 8.2 5.4 6.2 4.4 5.1C3.4 4.2 2 4.9 2 6.1C2 7 2.7 7.4 3.1 7.4" stroke-width="0.7"/><path d="M3.1 1.6C1.7 3.3 0.3 4.5 0.4 6.2C0.5 7.9 2 8.7 3.2 8.5" stroke-width="1.0"/></g><circle cx="176.60" cy="189.35" r="0.8" fill="#1a1a1a"/><g transform="translate(175.10,211.35)"><path d="M0.7 2.3C0.3 0.6 1.4 -0.1 2.4 0C4.0 0.1 4.6 1.6 4.3 3.0C3.9 4.8 2.2 6 0.3 6.8" fill="none" stroke="#1a1a1a" stroke-width="0.55" stroke-linecap="round"/><path d="M3.3 0.3C4.4 0.9 4.6 2.6 4.0 3.9" fill="none" stroke="#1a1a1a" stroke-width="0.95"/><circle cx="1.2" cy="2.1" r="0.8" fill="#1a1a1a"/><circle cx="5.7" cy="1" r="0.38" fill="#1a1a1a"/><circle cx="5.7" cy="3.1" r="0.38" fill="#1a1a1a"/></g><g transform="translate(182.30,183.45)" fill="none" stroke="#1a1a1a"><path d="M0 -3.2V1.3" stroke-width="0.35"/><path d="M0 -0.3Q0.9 -1.1 1.5 -0.5Q1.8 0.3 0 1.3" stroke-width="0.5"/></g><g transform="translate(182.30,217.50)" fill="none" stroke="#1a1a1a"><path d="M0 -3.2V1.3" stroke-width="0.35"/><path d="M0 -0.3Q0.9 -1.1 1.5 -0.5Q1.8 0.3 0 1.3" stroke-width="0.5"/></g><text x="161.30" y="184.70" font-size="3.7" fill="#262626" stroke="#262626" stroke-width="0.1" class="s" textLength="8.60" lengthAdjust="spacingAndGlyphs">Voice</text><text x="161.30" y="216.50" font-size="3.7" fill="#262626" stroke="#262626" stroke-width="0.1" class="s" textLength="8.60" lengthAdjust="spacingAndGlyphs">Voice</text><text x="188.6" y="183.35" font-size="5.7" font-weight="bold" fill="#1a1a1a" class="s" text-anchor="middle" textLength="5.3" lengthAdjust="spacingAndGlyphs">10</text><text x="188.7" y="187.50" font-size="5.7" font-weight="bold" fill="#1a1a1a" class="s" text-anchor="middle" textLength="3.5" lengthAdjust="spacingAndGlyphs">4</text><text x="188.6" y="215.35" font-size="5.7" font-weight="bold" fill="#1a1a1a" class="s" text-anchor="middle" textLength="5.3" lengthAdjust="spacingAndGlyphs">10</text><text x="188.7" y="219.50" font-size="5.7" font-weight="bold" fill="#1a1a1a" class="s" text-anchor="middle" textLength="3.5" lengthAdjust="spacingAndGlyphs">4</text><ellipse cx="196.90" cy="186.01" rx="1.32" ry="0.94" fill="#1a1a1a" transform="rotate(-24 196.90 186.01)"/><rect x="197.94" y="179.01" width="0.32" height="6.70" fill="#4a4a4a"/><ellipse cx="196.90" cy="188.78" rx="1.32" ry="0.94" fill="#1a1a1a" transform="rotate(-24 196.90 188.78)"/><rect x="195.49" y="189.08" width="0.32" height="3.90" fill="#6a6a6a"/><ellipse cx="213.90" cy="186.01" rx="1.32" ry="0.94" fill="#1a1a1a" transform="rotate(-24 213.90 186.01)"/><rect x="214.94" y="179.01" width="0.32" height="6.70" fill="#4a4a4a"/><ellipse cx="213.90" cy="188.78" rx="1.32" ry="0.94" fill="#1a1a1a" transform="rotate(-24 213.90 188.78)"/><rect x="212.49" y="189.08" width="0.32" height="3.90" fill="#6a6a6a"/><ellipse cx="230.90" cy="186.01" rx="1.15" ry="0.75" fill="none" stroke="#1a1a1a" stroke-width="0.5" transform="rotate(-24 230.90 186.01)"/><rect x="231.94" y="179.01" width="0.32" height="6.70" fill="#4a4a4a"/><ellipse cx="230.90" cy="188.78" rx="1.15" ry="0.75" fill="none" stroke="#1a1a1a" stroke-width="0.5" transform="rotate(-24 230.90 188.78)"/><rect x="229.49" y="189.08" width="0.32" height="3.90" fill="#6a6a6a"/><ellipse cx="258.40" cy="186.01" rx="1.15" ry="0.75" fill="none" stroke="#1a1a1a" stroke-width="0.5" transform="rotate(-24 258.40 186.01)"/><rect x="259.44" y="179.01" width="0.32" height="6.70" fill="#4a4a4a"/><ellipse cx="258.40" cy="188.78" rx="1.15" ry="0.75" fill="none" stroke="#1a1a1a" stroke-width="0.5" transform="rotate(-24 258.40 188.78)"/><rect x="256.99" y="189.08" width="0.32" height="3.90" fill="#6a6a6a"/><ellipse cx="285.90" cy="186.01" rx="1.32" ry="0.94" fill="#1a1a1a" transform="rotate(-24 285.90 186.01)"/><rect x="286.94" y="179.01" width="0.32" height="6.70" fill="#4a4a4a"/><ellipse cx="285.90" cy="186.01" rx="1.32" ry="0.94" fill="#1a1a1a" transform="rotate(-24 285.90 186.01)"/><rect x="284.49" y="186.31" width="0.32" height="3.90" fill="#6a6a6a"/><ellipse cx="302.60" cy="186.01" rx="1.32" ry="0.94" fill="#1a1a1a" transform="rotate(-24 302.60 186.01)"/><rect x="303.64" y="179.01" width="0.32" height="6.70" fill="#4a4a4a"/><ellipse cx="302.60" cy="186.01" rx="1.32" ry="0.94" fill="#1a1a1a" transform="rotate(-24 302.60 186.01)"/><rect x="301.19" y="186.31" width="0.32" height="3.90" fill="#6a6a6a"/><ellipse cx="319.80" cy="186.01" rx="1.32" ry="0.94" fill="#1a1a1a" transform="rotate(-24 319.80 186.01)"/><rect x="320.84" y="179.01" width="0.32" height="6.70" fill="#4a4a4a"/><ellipse cx="319.80" cy="186.01" rx="1.32" ry="0.94" fill="#1a1a1a" transform="rotate(-24 319.80 186.01)"/><rect x="318.39" y="186.31" width="0.32" height="3.90" fill="#6a6a6a"/><ellipse cx="338.10" cy="186.01" rx="1.32" ry="0.94" fill="#1a1a1a" transform="rotate(-24 338.10 186.01)"/><rect x="339.14" y="179.01" width="0.32" height="6.70" fill="#4a4a4a"/><ellipse cx="338.10" cy="186.01" rx="1.32" ry="0.94" fill="#1a1a1a" transform="rotate(-24 338.10 186.01)"/><rect x="336.69" y="186.31" width="0.32" height="3.90" fill="#6a6a6a"/><ellipse cx="354.30" cy="184.47" rx="1.32" ry="0.94" fill="#1a1a1a" transform="rotate(-24 354.30 184.47)"/><rect x="355.34" y="177.47" width="0.32" height="6.70" fill="#4a4a4a"/><ellipse cx="354.30" cy="186.53" rx="1.32" ry="0.94" fill="#1a1a1a" transform="rotate(-24 354.30 186.53)"/><rect x="352.89" y="186.83" width="0.32" height="3.90" fill="#6a6a6a"/><ellipse cx="371.40" cy="184.47" rx="1.15" ry="0.75" fill="none" stroke="#1a1a1a" stroke-width="0.5" transform="rotate(-24 371.40 184.47)"/><rect x="372.44" y="177.47" width="0.32" height="6.70" fill="#4a4a4a"/><ellipse cx="371.40" cy="186.53" rx="1.15" ry="0.75" fill="none" stroke="#1a1a1a" stroke-width="0.5" transform="rotate(-24 371.40 186.53)"/><rect x="369.99" y="186.83" width="0.32" height="3.90" fill="#6a6a6a"/><ellipse cx="335.80" cy="186.01" rx="1.32" ry="0.94" fill="#1a1a1a" transform="rotate(-24 335.80 186.01)"/><path d="M230.40 186.75C231.25 172.05 257.95 172.05 258.80 183.75" fill="none" stroke="#303030" stroke-width="0.36"/><path d="M230.40 187.95C231.22 196.85 256.78 196.85 257.60 187.35" fill="none" stroke="#303030" stroke-width="0.36"/><path d="M230.40 217.15C231.22 225.58 256.98 225.58 257.80 218.55" fill="none" stroke="#303030" stroke-width="0.36"/><ellipse cx="196.90" cy="211.97" rx="1.32" ry="0.94" fill="#1a1a1a" transform="rotate(-24 196.90 211.97)"/><rect x="197.94" y="205.77" width="0.32" height="5.90" fill="#4a4a4a"/><ellipse cx="196.90" cy="213.81" rx="1.32" ry="0.94" fill="#1a1a1a" transform="rotate(-24 196.90 213.81)"/><rect x="195.49" y="214.11" width="0.32" height="3.90" fill="#6a6a6a"/><ellipse cx="213.90" cy="211.97" rx="1.32" ry="0.94" fill="#1a1a1a" transform="rotate(-24 213.90 211.97)"/><rect x="214.94" y="205.77" width="0.32" height="5.90" fill="#4a4a4a"/><ellipse cx="213.90" cy="213.81" rx="1.32" ry="0.94" fill="#1a1a1a" transform="rotate(-24 213.90 213.81)"/><rect x="212.49" y="214.11" width="0.32" height="3.90" fill="#6a6a6a"/><ellipse cx="285.90" cy="211.97" rx="1.32" ry="0.94" fill="#1a1a1a" transform="rotate(-24 285.90 211.97)"/><rect x="286.94" y="205.77" width="0.32" height="5.90" fill="#4a4a4a"/><ellipse cx="285.90" cy="213.81" rx="1.32" ry="0.94" fill="#1a1a1a" transform="rotate(-24 285.90 213.81)"/><rect x="284.49" y="214.11" width="0.32" height="3.90" fill="#6a6a6a"/><ellipse cx="302.60" cy="211.97" rx="1.32" ry="0.94" fill="#1a1a1a" transform="rotate(-24 302.60 211.97)"/><rect x="303.64" y="205.77" width="0.32" height="5.90" fill="#4a4a4a"/><ellipse cx="302.60" cy="213.81" rx="1.32" ry="0.94" fill="#1a1a1a" transform="rotate(-24 302.60 213.81)"/><rect x="301.19" y="214.11" width="0.32" height="3.90" fill="#6a6a6a"/><ellipse cx="319.80" cy="211.97" rx="1.32" ry="0.94" fill="#1a1a1a" transform="rotate(-24 319.80 211.97)"/><rect x="320.84" y="205.77" width="0.32" height="5.90" fill="#4a4a4a"/><ellipse cx="319.80" cy="213.81" rx="1.32" ry="0.94" fill="#1a1a1a" transform="rotate(-24 319.80 213.81)"/><rect x="318.39" y="214.11" width="0.32" height="3.90" fill="#6a6a6a"/><ellipse cx="338.10" cy="210.84" rx="1.32" ry="0.94" fill="#1a1a1a" transform="rotate(-24 338.10 210.84)"/><rect x="339.14" y="204.64" width="0.32" height="5.90" fill="#4a4a4a"/><ellipse cx="338.10" cy="213.40" rx="1.32" ry="0.94" fill="#1a1a1a" transform="rotate(-24 338.10 213.40)"/><rect x="336.69" y="213.70" width="0.32" height="3.90" fill="#6a6a6a"/><ellipse cx="354.30" cy="209.91" rx="1.32" ry="0.94" fill="#1a1a1a" transform="rotate(-24 354.30 209.91)"/><rect x="355.34" y="203.72" width="0.32" height="5.90" fill="#4a4a4a"/><ellipse cx="354.30" cy="213.40" rx="1.32" ry="0.94" fill="#1a1a1a" transform="rotate(-24 354.30 213.40)"/><rect x="352.89" y="213.70" width="0.32" height="3.90" fill="#6a6a6a"/><ellipse cx="371.40" cy="208.69" rx="1.15" ry="0.75" fill="none" stroke="#1a1a1a" stroke-width="0.5" transform="rotate(-24 371.40 208.69)"/><rect x="372.44" y="202.49" width="0.32" height="5.90" fill="#4a4a4a"/><ellipse cx="371.40" cy="216.47" rx="1.15" ry="0.75" fill="none" stroke="#1a1a1a" stroke-width="0.5" transform="rotate(-24 371.40 216.47)"/><rect x="369.99" y="216.78" width="0.32" height="3.90" fill="#6a6a6a"/><ellipse cx="230.9" cy="209.75" rx="1.3" ry="0.8" fill="none" stroke="#1a1a1a" stroke-width="0.55"/><rect x="229.00" y="209.75" width="0.00" height="0.00" fill="#1a1a1a"/><ellipse cx="230.90" cy="216.06" rx="1.15" ry="0.75" fill="none" stroke="#1a1a1a" stroke-width="0.5" transform="rotate(-24 230.90 216.06)"/><rect x="229.49" y="216.37" width="0.32" height="5.20" fill="#3a3a3a"/><ellipse cx="258.40" cy="214.01" rx="1.15" ry="0.75" fill="none" stroke="#1a1a1a" stroke-width="0.5" transform="rotate(-24 258.40 214.01)"/><rect x="256.99" y="214.31" width="0.32" height="6.20" fill="#3a3a3a"/><text x="191.40" y="198.70" font-size="5.1" fill="#262626" stroke="#262626" stroke-width="0.05" class="s" textLength="11.20" lengthAdjust="spacingAndGlyphs">When</text><text x="210.80" y="198.70" font-size="5.1" fill="#262626" stroke="#262626" stroke-width="0.05" class="s" textLength="6.20" lengthAdjust="spacingAndGlyphs">the</text><text x="225.80" y="198.70" font-size="5.1" fill="#262626" stroke="#262626" stroke-width="0.05" class="s" textLength="10.20" lengthAdjust="spacingAndGlyphs">stone</text><text x="282.00" y="198.70" font-size="5.1" fill="#262626" stroke="#262626" stroke-width="0.05" class="s" textLength="7.20" lengthAdjust="spacingAndGlyphs">had</text><text x="298.30" y="198.70" font-size="5.1" fill="#262626" stroke="#262626" stroke-width="0.05" class="s" textLength="9.20" lengthAdjust="spacingAndGlyphs">been</text><text x="313.70" y="198.70" font-size="5.1" fill="#262626" stroke="#262626" stroke-width="0.05" class="s" textLength="12.00" lengthAdjust="spacingAndGlyphs">sealed</text><text x="334.70" y="198.70" font-size="5.1" fill="#262626" stroke="#262626" stroke-width="0.05" class="s" textLength="4.30" lengthAdjust="spacingAndGlyphs">by</text><text x="350.80" y="198.70" font-size="5.1" fill="#262626" stroke="#262626" stroke-width="0.05" class="s" textLength="6.20" lengthAdjust="spacingAndGlyphs">the</text><text x="366.00" y="198.70" font-size="5.1" fill="#262626" stroke="#262626" stroke-width="0.05" class="s" textLength="10.70" lengthAdjust="spacingAndGlyphs">Jews,</text><rect x="395.70" y="177.85" width="0.6" height="0.6" fill="#999"/><rect x="395.70" y="209.85" width="0.6" height="0.6" fill="#999"/><path d="M162.30 247.20H398.00v0.4H162.30ZM162.30 249.25H398.00v0.4H162.30ZM162.30 251.30H398.00v0.4H162.30ZM162.30 253.35H398.00v0.4H162.30ZM162.30 255.40H398.00v0.4H162.30Z" fill="#858585"/><path d="M162.30 277.15H398.00v0.4H162.30ZM162.30 279.20H398.00v0.4H162.30ZM162.30 281.25H398.00v0.4H162.30ZM162.30 283.30H398.00v0.4H162.30ZM162.30 285.35H398.00v0.4H162.30Z" fill="#858585"/><rect x="161.20" y="245.80" width="1" height="41.35" fill="#2a2a2a"/><path d="M161.20 246.00Q163.10 245.60 164.30 244.40M161.20 286.95Q163.10 287.35 164.30 288.55" stroke="#1a1a1a" stroke-width="0.6" fill="none"/><rect x="397.80" y="247.40" width="0.40" height="8.20" fill="#1a1a1a"/><rect x="397.80" y="277.35" width="0.40" height="8.20" fill="#1a1a1a"/><g transform="translate(163.20,246.85) scale(1.1)" fill="none" stroke="#1a1a1a" stroke-linecap="round" stroke-linejoin="round"><path d="M1.4 9.3C1.4 10.9 3.9 11 3.8 9.2L2.7 -0.4C2.5 -2.3 3.4 -3.1 3.8 -2.7C4.4 -1.6 4.1 0.3 3.1 1.6C1.7 3.3 0.3 4.5 0.4 6.2C0.5 7.9 2 8.7 3.2 8.5C4.9 8.2 5.4 6.2 4.4 5.1C3.4 4.2 2 4.9 2 6.1C2 7 2.7 7.4 3.1 7.4" stroke-width="0.7"/><path d="M3.1 1.6C1.7 3.3 0.3 4.5 0.4 6.2C0.5 7.9 2 8.7 3.2 8.5" stroke-width="1.0"/></g><circle cx="165.20" cy="257.40" r="0.8" fill="#1a1a1a"/><g transform="translate(163.70,277.35)"><path d="M0.7 2.3C0.3 0.6 1.4 -0.1 2.4 0C4.0 0.1 4.6 1.6 4.3 3.0C3.9 4.8 2.2 6 0.3 6.8" fill="none" stroke="#1a1a1a" stroke-width="0.55" stroke-linecap="round"/><path d="M3.3 0.3C4.4 0.9 4.6 2.6 4.0 3.9" fill="none" stroke="#1a1a1a" stroke-width="0.95"/><circle cx="1.2" cy="2.1" r="0.8" fill="#1a1a1a"/><circle cx="5.7" cy="1" r="0.38" fill="#1a1a1a"/><circle cx="5.7" cy="3.1" r="0.38" fill="#1a1a1a"/></g><g transform="translate(170.90,251.50)" fill="none" stroke="#1a1a1a"><path d="M0 -3.2V1.3" stroke-width="0.35"/><path d="M0 -0.3Q0.9 -1.1 1.5 -0.5Q1.8 0.3 0 1.3" stroke-width="0.5"/></g><g transform="translate(170.90,283.50)" fill="none" stroke="#1a1a1a"><path d="M0 -3.2V1.3" stroke-width="0.35"/><path d="M0 -0.3Q0.9 -1.1 1.5 -0.5Q1.8 0.3 0 1.3" stroke-width="0.5"/></g><text x="162.90" y="244.20" font-size="3.2" fill="#333" class="s" font-style="italic">2</text><ellipse cx="178.90" cy="252.53" rx="1.32" ry="0.94" fill="#1a1a1a" transform="rotate(-24 178.90 252.53)"/><ellipse cx="178.90" cy="254.58" rx="1.32" ry="0.94" fill="#1a1a1a" transform="rotate(-24 178.90 254.58)"/><rect x="179.94" y="246.03" width="0.32" height="8.25" fill="#4a4a4a"/><rect x="177.47" y="254.40" width="0.35" height="7.50" fill="#1a1a1a"/><g fill="#1a1a1a"><rect x="224.20" y="251.75" width="0.9" height="3.6"/><rect x="225.90" y="251.75" width="0.9" height="3.6"/><rect x="224.90" y="252.45" width="1.2" height="0.35"/><rect x="224.90" y="254.30" width="1.2" height="0.35"/></g><ellipse cx="306.40" cy="252.53" rx="1.15" ry="0.75" fill="none" stroke="#1a1a1a" stroke-width="0.5" transform="rotate(-24 306.40 252.53)"/><rect x="307.44" y="245.53" width="0.32" height="6.70" fill="#4a4a4a"/><ellipse cx="306.40" cy="254.58" rx="1.15" ry="0.75" fill="none" stroke="#1a1a1a" stroke-width="0.5" transform="rotate(-24 306.40 254.58)"/><rect x="304.99" y="254.88" width="0.32" height="3.90" fill="#6a6a6a"/><ellipse cx="352.60" cy="253.14" rx="1.15" ry="0.75" fill="none" stroke="#1a1a1a" stroke-width="0.5" transform="rotate(-24 352.60 253.14)"/><rect x="353.64" y="248.14" width="0.32" height="4.70" fill="#4a4a4a"/><ellipse cx="352.60" cy="256.22" rx="1.15" ry="0.75" fill="none" stroke="#1a1a1a" stroke-width="0.5" transform="rotate(-24 352.60 256.22)"/><rect x="351.19" y="256.52" width="0.32" height="3.90" fill="#6a6a6a"/><ellipse cx="178.90" cy="276.12" rx="1.32" ry="0.94" fill="#1a1a1a" transform="rotate(-24 178.90 276.12)"/><rect x="179.94" y="269.62" width="0.32" height="6.20" fill="#4a4a4a"/><ellipse cx="178.90" cy="278.99" rx="1.32" ry="0.94" fill="#1a1a1a" transform="rotate(-24 178.90 278.99)"/><rect x="177.49" y="279.29" width="0.32" height="3.90" fill="#6a6a6a"/><g fill="#1a1a1a"><rect x="224.20" y="275.15" width="0.9" height="3.6"/><rect x="225.90" y="275.15" width="0.9" height="3.6"/><rect x="224.90" y="275.85" width="1.2" height="0.35"/><rect x="224.90" y="277.70" width="1.2" height="0.35"/></g><g fill="#1a1a1a"><rect x="224.20" y="277.60" width="0.9" height="3.6"/><rect x="225.90" y="277.60" width="0.9" height="3.6"/><rect x="224.90" y="278.30" width="1.2" height="0.35"/><rect x="224.90" y="280.15" width="1.2" height="0.35"/></g><ellipse cx="306.40" cy="274.69" rx="1.15" ry="0.75" fill="none" stroke="#1a1a1a" stroke-width="0.5" transform="rotate(-24 306.40 274.69)"/><rect x="307.44" y="269.19" width="0.32" height="5.20" fill="#4a4a4a"/><ellipse cx="306.40" cy="282.48" rx="1.15" ry="0.75" fill="none" stroke="#1a1a1a" stroke-width="0.5" transform="rotate(-24 306.40 282.48)"/><rect x="304.99" y="282.78" width="0.32" height="3.90" fill="#6a6a6a"/><ellipse cx="352.60" cy="277.97" rx="1.32" ry="0.94" fill="#1a1a1a" transform="rotate(-24 352.60 277.97)"/><rect x="353.64" y="271.47" width="0.32" height="6.20" fill="#4a4a4a"/><ellipse cx="352.60" cy="279.40" rx="1.32" ry="0.94" fill="#1a1a1a" transform="rotate(-24 352.60 279.40)"/><rect x="351.19" y="279.70" width="0.32" height="3.90" fill="#6a6a6a"/><text x="174.20" y="266.90" font-size="5.1" fill="#262626" stroke="#262626" stroke-width="0.05" class="s" textLength="90.80" lengthAdjust="spacingAndGlyphs">while the soldiers were guarding Thy most pure</text><text x="303.70" y="266.90" font-size="5.1" fill="#262626" stroke="#262626" stroke-width="0.05" class="s" textLength="5.30" lengthAdjust="spacingAndGlyphs">Bo</text><text x="328.60" y="266.90" font-size="5.1" fill="#777" stroke="#777" stroke-width="0.05" class="s">-</text><text x="350.00" y="266.90" font-size="5.1" fill="#262626" stroke="#262626" stroke-width="0.05" class="s" textLength="5.60" lengthAdjust="spacingAndGlyphs">dy.</text><rect x="390" y="237.6" width="4.8" height="4.6" fill="#f0f0f0" stroke="#c4c4c4" stroke-width="0.4"/><path d="M393.6 239.0V240.5H391.4M392.2 239.7L391.3 240.5L392.2 241.29999999999998" fill="none" stroke="#a8a8a8" stroke-width="0.4"/><rect x="391.30" y="245.70" width="0.6" height="0.6" fill="#999"/><rect x="391.30" y="275.65" width="0.6" height="0.6" fill="#999"/><path d="M162.30 313.15H398.00v0.4H162.30ZM162.30 315.20H398.00v0.4H162.30ZM162.30 317.25H398.00v0.4H162.30ZM162.30 319.30H398.00v0.4H162.30ZM162.30 321.35H398.00v0.4H162.30Z" fill="#858585"/><path d="M162.30 345.15H398.00v0.4H162.30ZM162.30 347.20H398.00v0.4H162.30ZM162.30 349.25H398.00v0.4H162.30ZM162.30 351.30H398.00v0.4H162.30ZM162.30 353.35H398.00v0.4H162.30Z" fill="#858585"/><rect x="161.20" y="311.75" width="1" height="43.40" fill="#2a2a2a"/><path d="M161.20 311.95Q163.10 311.55 164.30 310.35M161.20 354.95Q163.10 355.35 164.30 356.55" stroke="#1a1a1a" stroke-width="0.6" fill="none"/><rect x="397.80" y="313.35" width="0.40" height="8.20" fill="#1a1a1a"/><rect x="397.80" y="345.35" width="0.40" height="8.20" fill="#1a1a1a"/><g transform="translate(163.20,312.80) scale(1.1)" fill="none" stroke="#1a1a1a" stroke-linecap="round" stroke-linejoin="round"><path d="M1.4 9.3C1.4 10.9 3.9 11 3.8 9.2L2.7 -0.4C2.5 -2.3 3.4 -3.1 3.8 -2.7C4.4 -1.6 4.1 0.3 3.1 1.6C1.7 3.3 0.3 4.5 0.4 6.2C0.5 7.9 2 8.7 3.2 8.5C4.9 8.2 5.4 6.2 4.4 5.1C3.4 4.2 2 4.9 2 6.1C2 7 2.7 7.4 3.1 7.4" stroke-width="0.7"/><path d="M3.1 1.6C1.7 3.3 0.3 4.5 0.4 6.2C0.5 7.9 2 8.7 3.2 8.5" stroke-width="1.0"/></g><circle cx="165.20" cy="323.35" r="0.8" fill="#1a1a1a"/><g transform="translate(163.70,345.35)"><path d="M0.7 2.3C0.3 0.6 1.4 -0.1 2.4 0C4.0 0.1 4.6 1.6 4.3 3.0C3.9 4.8 2.2 6 0.3 6.8" fill="none" stroke="#1a1a1a" stroke-width="0.55" stroke-linecap="round"/><path d="M3.3 0.3C4.4 0.9 4.6 2.6 4.0 3.9" fill="none" stroke="#1a1a1a" stroke-width="0.95"/><circle cx="1.2" cy="2.1" r="0.8" fill="#1a1a1a"/><circle cx="5.7" cy="1" r="0.38" fill="#1a1a1a"/><circle cx="5.7" cy="3.1" r="0.38" fill="#1a1a1a"/></g><g transform="translate(170.90,317.45)" fill="none" stroke="#1a1a1a"><path d="M0 -3.2V1.3" stroke-width="0.35"/><path d="M0 -0.3Q0.9 -1.1 1.5 -0.5Q1.8 0.3 0 1.3" stroke-width="0.5"/></g><g transform="translate(170.90,351.50)" fill="none" stroke="#1a1a1a"><path d="M0 -3.2V1.3" stroke-width="0.35"/><path d="M0 -0.3Q0.9 -1.1 1.5 -0.5Q1.8 0.3 0 1.3" stroke-width="0.5"/></g><text x="162.90" y="310.15" font-size="3.2" fill="#333" class="s" font-style="italic">3</text><rect x="320.10" y="313.35" width="0.40" height="8.20" fill="#1a1a1a"/><rect x="320.10" y="345.35" width="0.40" height="8.20" fill="#1a1a1a"/><ellipse cx="179.30" cy="320.01" rx="1.32" ry="0.94" fill="#1a1a1a" transform="rotate(-24 179.30 320.01)"/><rect x="180.34" y="313.01" width="0.32" height="6.70" fill="#4a4a4a"/><ellipse cx="179.30" cy="322.78" rx="1.32" ry="0.94" fill="#1a1a1a" transform="rotate(-24 179.30 322.78)"/><rect x="177.89" y="323.08" width="0.32" height="3.90" fill="#6a6a6a"/><ellipse cx="189.60" cy="320.01" rx="1.32" ry="0.94" fill="#1a1a1a" transform="rotate(-24 189.60 320.01)"/><rect x="190.64" y="313.01" width="0.32" height="6.70" fill="#4a4a4a"/><ellipse cx="189.60" cy="322.78" rx="1.32" ry="0.94" fill="#1a1a1a" transform="rotate(-24 189.60 322.78)"/><rect x="188.19" y="323.08" width="0.32" height="3.90" fill="#6a6a6a"/><ellipse cx="200.40" cy="320.01" rx="1.15" ry="0.75" fill="none" stroke="#1a1a1a" stroke-width="0.5" transform="rotate(-24 200.40 320.01)"/><rect x="201.44" y="313.01" width="0.32" height="6.70" fill="#4a4a4a"/><ellipse cx="200.40" cy="322.78" rx="1.15" ry="0.75" fill="none" stroke="#1a1a1a" stroke-width="0.5" transform="rotate(-24 200.40 322.78)"/><rect x="198.99" y="323.08" width="0.32" height="3.90" fill="#6a6a6a"/><ellipse cx="217.60" cy="320.01" rx="1.15" ry="0.75" fill="none" stroke="#1a1a1a" stroke-width="0.5" transform="rotate(-24 217.60 320.01)"/><rect x="218.64" y="313.01" width="0.32" height="6.70" fill="#4a4a4a"/><ellipse cx="217.60" cy="321.55" rx="1.15" ry="0.75" fill="none" stroke="#1a1a1a" stroke-width="0.5" transform="rotate(-24 217.60 321.55)"/><rect x="216.19" y="321.85" width="0.32" height="3.90" fill="#6a6a6a"/><ellipse cx="234.30" cy="320.01" rx="1.32" ry="0.94" fill="#1a1a1a" transform="rotate(-24 234.30 320.01)"/><rect x="235.34" y="313.01" width="0.32" height="6.70" fill="#4a4a4a"/><ellipse cx="234.30" cy="320.01" rx="1.32" ry="0.94" fill="#1a1a1a" transform="rotate(-24 234.30 320.01)"/><rect x="232.89" y="320.31" width="0.32" height="3.90" fill="#6a6a6a"/><ellipse cx="244.60" cy="320.01" rx="1.32" ry="0.94" fill="#1a1a1a" transform="rotate(-24 244.60 320.01)"/><rect x="245.64" y="313.01" width="0.32" height="6.70" fill="#4a4a4a"/><ellipse cx="244.60" cy="320.01" rx="1.32" ry="0.94" fill="#1a1a1a" transform="rotate(-24 244.60 320.01)"/><rect x="243.19" y="320.31" width="0.32" height="3.90" fill="#6a6a6a"/><ellipse cx="255.40" cy="320.01" rx="1.32" ry="0.94" fill="#1a1a1a" transform="rotate(-24 255.40 320.01)"/><rect x="256.44" y="313.01" width="0.32" height="6.70" fill="#4a4a4a"/><ellipse cx="255.40" cy="320.01" rx="1.32" ry="0.94" fill="#1a1a1a" transform="rotate(-24 255.40 320.01)"/><rect x="253.99" y="320.31" width="0.32" height="3.90" fill="#6a6a6a"/><ellipse cx="267.50" cy="320.01" rx="1.32" ry="0.94" fill="#1a1a1a" transform="rotate(-24 267.50 320.01)"/><rect x="268.54" y="313.01" width="0.32" height="6.70" fill="#4a4a4a"/><ellipse cx="267.50" cy="320.01" rx="1.32" ry="0.94" fill="#1a1a1a" transform="rotate(-24 267.50 320.01)"/><rect x="266.09" y="320.31" width="0.32" height="3.90" fill="#6a6a6a"/><ellipse cx="277.10" cy="318.89" rx="1.32" ry="0.94" fill="#1a1a1a" transform="rotate(-24 277.10 318.89)"/><rect x="278.14" y="311.89" width="0.32" height="6.70" fill="#4a4a4a"/><ellipse cx="277.10" cy="320.73" rx="1.32" ry="0.94" fill="#1a1a1a" transform="rotate(-24 277.10 320.73)"/><rect x="275.69" y="321.03" width="0.32" height="3.90" fill="#6a6a6a"/><ellipse cx="288.10" cy="318.06" rx="1.15" ry="0.75" fill="none" stroke="#1a1a1a" stroke-width="0.5" transform="rotate(-24 288.10 318.06)"/><rect x="289.14" y="311.06" width="0.32" height="6.70" fill="#4a4a4a"/><ellipse cx="288.10" cy="320.53" rx="1.15" ry="0.75" fill="none" stroke="#1a1a1a" stroke-width="0.5" transform="rotate(-24 288.10 320.53)"/><rect x="286.69" y="320.83" width="0.32" height="3.90" fill="#6a6a6a"/><ellipse cx="305.10" cy="318.06" rx="1.15" ry="0.75" fill="none" stroke="#1a1a1a" stroke-width="0.5" transform="rotate(-24 305.10 318.06)"/><rect x="306.14" y="311.06" width="0.32" height="6.70" fill="#4a4a4a"/><ellipse cx="305.10" cy="320.53" rx="1.15" ry="0.75" fill="none" stroke="#1a1a1a" stroke-width="0.5" transform="rotate(-24 305.10 320.53)"/><rect x="303.69" y="320.83" width="0.32" height="3.90" fill="#6a6a6a"/><ellipse cx="328.80" cy="318.48" rx="1.32" ry="0.94" fill="#1a1a1a" transform="rotate(-24 328.80 318.48)"/><ellipse cx="328.80" cy="320.12" rx="1.32" ry="0.94" fill="#1a1a1a" transform="rotate(-24 328.80 320.12)"/><rect x="329.84" y="311.48" width="0.32" height="8.34" fill="#4a4a4a"/><ellipse cx="338.40" cy="318.48" rx="1.32" ry="0.94" fill="#1a1a1a" transform="rotate(-24 338.40 318.48)"/><ellipse cx="338.40" cy="320.12" rx="1.32" ry="0.94" fill="#1a1a1a" transform="rotate(-24 338.40 320.12)"/><rect x="339.44" y="311.48" width="0.32" height="8.34" fill="#4a4a4a"/><ellipse cx="348.10" cy="319.50" rx="1.15" ry="0.75" fill="none" stroke="#1a1a1a" stroke-width="0.5" transform="rotate(-24 348.10 319.50)"/><rect x="349.14" y="312.50" width="0.32" height="6.70" fill="#4a4a4a"/><ellipse cx="348.10" cy="322.58" rx="1.15" ry="0.75" fill="none" stroke="#1a1a1a" stroke-width="0.5" transform="rotate(-24 348.10 322.58)"/><rect x="346.69" y="322.88" width="0.32" height="3.90" fill="#6a6a6a"/><ellipse cx="363.80" cy="319.50" rx="1.32" ry="0.94" fill="#1a1a1a" transform="rotate(-24 363.80 319.50)"/><rect x="364.84" y="312.50" width="0.32" height="6.70" fill="#4a4a4a"/><ellipse cx="363.80" cy="321.55" rx="1.32" ry="0.94" fill="#1a1a1a" transform="rotate(-24 363.80 321.55)"/><rect x="362.39" y="321.85" width="0.32" height="3.90" fill="#6a6a6a"/><ellipse cx="373.80" cy="319.50" rx="1.32" ry="0.94" fill="#1a1a1a" transform="rotate(-24 373.80 319.50)"/><rect x="374.84" y="312.50" width="0.32" height="6.70" fill="#4a4a4a"/><ellipse cx="373.80" cy="321.55" rx="1.32" ry="0.94" fill="#1a1a1a" transform="rotate(-24 373.80 321.55)"/><rect x="372.39" y="321.85" width="0.32" height="3.90" fill="#6a6a6a"/><ellipse cx="383.40" cy="319.50" rx="1.15" ry="0.75" fill="none" stroke="#1a1a1a" stroke-width="0.5" transform="rotate(-24 383.40 319.50)"/><rect x="384.44" y="312.50" width="0.32" height="6.70" fill="#4a4a4a"/><ellipse cx="383.40" cy="323.60" rx="1.15" ry="0.75" fill="none" stroke="#1a1a1a" stroke-width="0.5" transform="rotate(-24 383.40 323.60)"/><rect x="381.99" y="323.90" width="0.32" height="3.90" fill="#6a6a6a"/><ellipse cx="265.30" cy="320.01" rx="1.32" ry="0.94" fill="#1a1a1a" transform="rotate(-24 265.30 320.01)"/><rect x="327.38" y="319.35" width="0.35" height="7.00" fill="#1a1a1a"/><rect x="336.97" y="319.35" width="0.35" height="7.00" fill="#1a1a1a"/><path d="M200.00 320.75C200.55 306.92 217.65 306.92 218.20 317.75" fill="none" stroke="#303030" stroke-width="0.36"/><path d="M200.00 321.95C200.51 329.32 216.49 329.32 217.00 321.35" fill="none" stroke="#303030" stroke-width="0.36"/><path d="M200.00 351.15C200.52 358.18 216.68 358.18 217.20 352.55" fill="none" stroke="#303030" stroke-width="0.36"/><ellipse cx="179.30" cy="345.97" rx="1.32" ry="0.94" fill="#1a1a1a" transform="rotate(-24 179.30 345.97)"/><rect x="180.34" y="339.97" width="0.32" height="5.70" fill="#4a4a4a"/><ellipse cx="179.30" cy="347.81" rx="1.32" ry="0.94" fill="#1a1a1a" transform="rotate(-24 179.30 347.81)"/><rect x="177.89" y="348.11" width="0.32" height="3.90" fill="#6a6a6a"/><ellipse cx="189.60" cy="345.97" rx="1.32" ry="0.94" fill="#1a1a1a" transform="rotate(-24 189.60 345.97)"/><rect x="190.64" y="339.97" width="0.32" height="5.70" fill="#4a4a4a"/><ellipse cx="189.60" cy="347.81" rx="1.32" ry="0.94" fill="#1a1a1a" transform="rotate(-24 189.60 347.81)"/><rect x="188.19" y="348.11" width="0.32" height="3.90" fill="#6a6a6a"/><ellipse cx="234.30" cy="345.97" rx="1.32" ry="0.94" fill="#1a1a1a" transform="rotate(-24 234.30 345.97)"/><rect x="235.34" y="339.97" width="0.32" height="5.70" fill="#4a4a4a"/><ellipse cx="234.30" cy="347.81" rx="1.32" ry="0.94" fill="#1a1a1a" transform="rotate(-24 234.30 347.81)"/><rect x="232.89" y="348.11" width="0.32" height="3.90" fill="#6a6a6a"/><ellipse cx="244.60" cy="345.97" rx="1.32" ry="0.94" fill="#1a1a1a" transform="rotate(-24 244.60 345.97)"/><rect x="245.64" y="339.97" width="0.32" height="5.70" fill="#4a4a4a"/><ellipse cx="244.60" cy="347.81" rx="1.32" ry="0.94" fill="#1a1a1a" transform="rotate(-24 244.60 347.81)"/><rect x="243.19" y="348.11" width="0.32" height="3.90" fill="#6a6a6a"/><ellipse cx="255.40" cy="345.97" rx="1.32" ry="0.94" fill="#1a1a1a" transform="rotate(-24 255.40 345.97)"/><rect x="256.44" y="339.97" width="0.32" height="5.70" fill="#4a4a4a"/><ellipse cx="255.40" cy="347.81" rx="1.32" ry="0.94" fill="#1a1a1a" transform="rotate(-24 255.40 347.81)"/><rect x="253.99" y="348.11" width="0.32" height="3.90" fill="#6a6a6a"/><ellipse cx="267.50" cy="344.84" rx="1.32" ry="0.94" fill="#1a1a1a" transform="rotate(-24 267.50 344.84)"/><rect x="268.54" y="338.84" width="0.32" height="5.70" fill="#4a4a4a"/><ellipse cx="267.50" cy="347.40" rx="1.32" ry="0.94" fill="#1a1a1a" transform="rotate(-24 267.50 347.40)"/><rect x="266.09" y="347.70" width="0.32" height="3.90" fill="#6a6a6a"/><ellipse cx="277.10" cy="343.92" rx="1.32" ry="0.94" fill="#1a1a1a" transform="rotate(-24 277.10 343.92)"/><rect x="278.14" y="337.92" width="0.32" height="5.70" fill="#4a4a4a"/><ellipse cx="277.10" cy="347.40" rx="1.32" ry="0.94" fill="#1a1a1a" transform="rotate(-24 277.10 347.40)"/><rect x="275.69" y="347.70" width="0.32" height="3.90" fill="#6a6a6a"/><ellipse cx="288.10" cy="342.69" rx="1.15" ry="0.75" fill="none" stroke="#1a1a1a" stroke-width="0.5" transform="rotate(-24 288.10 342.69)"/><rect x="289.14" y="336.69" width="0.32" height="5.70" fill="#4a4a4a"/><ellipse cx="288.10" cy="350.48" rx="1.15" ry="0.75" fill="none" stroke="#1a1a1a" stroke-width="0.5" transform="rotate(-24 288.10 350.48)"/><rect x="286.69" y="350.78" width="0.32" height="3.90" fill="#6a6a6a"/><ellipse cx="305.10" cy="342.69" rx="1.15" ry="0.75" fill="none" stroke="#1a1a1a" stroke-width="0.5" transform="rotate(-24 305.10 342.69)"/><rect x="306.14" y="336.69" width="0.32" height="5.70" fill="#4a4a4a"/><ellipse cx="305.10" cy="350.48" rx="1.15" ry="0.75" fill="none" stroke="#1a1a1a" stroke-width="0.5" transform="rotate(-24 305.10 350.48)"/><rect x="303.69" y="350.78" width="0.32" height="3.90" fill="#6a6a6a"/><ellipse cx="328.80" cy="343.71" rx="1.32" ry="0.94" fill="#1a1a1a" transform="rotate(-24 328.80 343.71)"/><rect x="329.84" y="337.71" width="0.32" height="5.70" fill="#4a4a4a"/><ellipse cx="328.80" cy="347.40" rx="1.32" ry="0.94" fill="#1a1a1a" transform="rotate(-24 328.80 347.40)"/><rect x="327.39" y="347.70" width="0.32" height="3.90" fill="#6a6a6a"/><ellipse cx="338.40" cy="343.71" rx="1.32" ry="0.94" fill="#1a1a1a" transform="rotate(-24 338.40 343.71)"/><rect x="339.44" y="337.71" width="0.32" height="5.70" fill="#4a4a4a"/><ellipse cx="338.40" cy="347.40" rx="1.32" ry="0.94" fill="#1a1a1a" transform="rotate(-24 338.40 347.40)"/><rect x="336.99" y="347.70" width="0.32" height="3.90" fill="#6a6a6a"/><ellipse cx="348.10" cy="343.71" rx="1.15" ry="0.75" fill="none" stroke="#1a1a1a" stroke-width="0.5" transform="rotate(-24 348.10 343.71)"/><rect x="349.14" y="337.71" width="0.32" height="5.70" fill="#4a4a4a"/><ellipse cx="348.10" cy="350.48" rx="1.15" ry="0.75" fill="none" stroke="#1a1a1a" stroke-width="0.5" transform="rotate(-24 348.10 350.48)"/><rect x="346.69" y="350.78" width="0.32" height="3.90" fill="#6a6a6a"/><ellipse cx="363.80" cy="343.71" rx="1.32" ry="0.94" fill="#1a1a1a" transform="rotate(-24 363.80 343.71)"/><rect x="364.84" y="337.71" width="0.32" height="5.70" fill="#4a4a4a"/><ellipse cx="363.80" cy="350.48" rx="1.32" ry="0.94" fill="#1a1a1a" transform="rotate(-24 363.80 350.48)"/><rect x="362.39" y="350.78" width="0.32" height="3.90" fill="#6a6a6a"/><ellipse cx="373.80" cy="343.71" rx="1.32" ry="0.94" fill="#1a1a1a" transform="rotate(-24 373.80 343.71)"/><rect x="374.84" y="337.71" width="0.32" height="5.70" fill="#4a4a4a"/><ellipse cx="373.80" cy="350.48" rx="1.32" ry="0.94" fill="#1a1a1a" transform="rotate(-24 373.80 350.48)"/><rect x="372.39" y="350.78" width="0.32" height="3.90" fill="#6a6a6a"/><ellipse cx="383.40" cy="346.89" rx="1.15" ry="0.75" fill="none" stroke="#1a1a1a" stroke-width="0.5" transform="rotate(-24 383.40 346.89)"/><rect x="384.44" y="340.89" width="0.32" height="5.70" fill="#4a4a4a"/><ellipse cx="200.4" cy="343.75" rx="1.3" ry="0.8" fill="none" stroke="#1a1a1a" stroke-width="0.55"/><ellipse cx="200.40" cy="350.06" rx="1.15" ry="0.75" fill="none" stroke="#1a1a1a" stroke-width="0.5" transform="rotate(-24 200.40 350.06)"/><rect x="198.99" y="350.37" width="0.32" height="5.20" fill="#3a3a3a"/><ellipse cx="217.60" cy="348.02" rx="1.15" ry="0.75" fill="none" stroke="#1a1a1a" stroke-width="0.5" transform="rotate(-24 217.60 348.02)"/><rect x="216.19" y="348.32" width="0.32" height="6.20" fill="#3a3a3a"/><text x="174.20" y="332.90" font-size="5.1" fill="#262626" stroke="#262626" stroke-width="0.05" class="s" textLength="8.60" lengthAdjust="spacingAndGlyphs">Thou</text><text x="184.70" y="332.90" font-size="5.1" fill="#262626" stroke="#262626" stroke-width="0.05" class="s" textLength="9.00" lengthAdjust="spacingAndGlyphs">didst</text><text x="197.00" y="332.90" font-size="5.1" fill="#262626" stroke="#262626" stroke-width="0.05" class="s" textLength="6.70" lengthAdjust="spacingAndGlyphs">rise</text><text x="232.00" y="332.90" font-size="5.1" fill="#262626" stroke="#262626" stroke-width="0.05" class="s" textLength="4.30" lengthAdjust="spacingAndGlyphs">on</text><text x="242.00" y="332.90" font-size="5.1" fill="#262626" stroke="#262626" stroke-width="0.05" class="s" textLength="5.70" lengthAdjust="spacingAndGlyphs">the</text><text x="251.30" y="332.90" font-size="5.1" fill="#262626" stroke="#262626" stroke-width="0.05" class="s" textLength="8.70" lengthAdjust="spacingAndGlyphs">third</text><text x="262.50" y="332.90" font-size="5.1" fill="#262626" stroke="#262626" stroke-width="0.05" class="s" textLength="8.00" lengthAdjust="spacingAndGlyphs">day,</text><text x="275.00" y="332.90" font-size="5.1" fill="#262626" stroke="#262626" stroke-width="0.05" class="s" textLength="3.70" lengthAdjust="spacingAndGlyphs">O</text><text x="284.20" y="332.90" font-size="5.1" fill="#262626" stroke="#262626" stroke-width="0.05" class="s" textLength="6.60" lengthAdjust="spacingAndGlyphs">Sav</text><text x="296.20" y="332.90" font-size="5.1" fill="#777" stroke="#777" stroke-width="0.05" class="s">-</text><text x="302.20" y="332.90" font-size="5.1" fill="#262626" stroke="#262626" stroke-width="0.05" class="s" textLength="5.60" lengthAdjust="spacingAndGlyphs">ior,</text><text x="323.30" y="332.90" font-size="5.1" fill="#262626" stroke="#262626" stroke-width="0.05" class="s" textLength="17.50" lengthAdjust="spacingAndGlyphs">grant-ing</text><text x="345.00" y="332.90" font-size="5.1" fill="#262626" stroke="#262626" stroke-width="0.05" class="s" textLength="5.80" lengthAdjust="spacingAndGlyphs">life</text><text x="361.70" y="332.90" font-size="5.1" fill="#262626" stroke="#262626" stroke-width="0.05" class="s" textLength="3.60" lengthAdjust="spacingAndGlyphs">to</text><text x="370.30" y="332.90" font-size="5.1" fill="#262626" stroke="#262626" stroke-width="0.05" class="s" textLength="18.50" lengthAdjust="spacingAndGlyphs">the world.</text><rect x="390" y="304.1" width="4.8" height="4.6" fill="#f0f0f0" stroke="#c4c4c4" stroke-width="0.4"/><path d="M393.6 305.5V307.0H391.4M392.2 306.20000000000005L391.3 307.0L392.2 307.8" fill="none" stroke="#a8a8a8" stroke-width="0.4"/><rect x="391.30" y="311.65" width="0.6" height="0.6" fill="#999"/><rect x="391.30" y="343.65" width="0.6" height="0.6" fill="#999"/><rect x="316.20" y="311.65" width="0.6" height="0.6" fill="#999"/><rect x="316.20" y="343.65" width="0.6" height="0.6" fill="#999"/><path d="M162.30 379.90H398.00v0.4H162.30ZM162.30 381.95H398.00v0.4H162.30ZM162.30 384.00H398.00v0.4H162.30ZM162.30 386.05H398.00v0.4H162.30ZM162.30 388.10H398.00v0.4H162.30Z" fill="#858585"/><path d="M162.30 410.90H398.00v0.4H162.30ZM162.30 412.95H398.00v0.4H162.30ZM162.30 415.00H398.00v0.4H162.30ZM162.30 417.05H398.00v0.4H162.30ZM162.30 419.10H398.00v0.4H162.30Z" fill="#858585"/><rect x="161.20" y="378.50" width="1" height="42.40" fill="#2a2a2a"/><path d="M161.20 378.70Q163.10 378.30 164.30 377.10M161.20 420.70Q163.10 421.10 164.30 422.30" stroke="#1a1a1a" stroke-width="0.6" fill="none"/><rect x="397.80" y="380.10" width="0.40" height="8.20" fill="#1a1a1a"/><rect x="397.80" y="411.10" width="0.40" height="8.20" fill="#1a1a1a"/><g transform="translate(163.20,379.55) scale(1.1)" fill="none" stroke="#1a1a1a" stroke-linecap="round" stroke-linejoin="round"><path d="M1.4 9.3C1.4 10.9 3.9 11 3.8 9.2L2.7 -0.4C2.5 -2.3 3.4 -3.1 3.8 -2.7C4.4 -1.6 4.1 0.3 3.1 1.6C1.7 3.3 0.3 4.5 0.4 6.2C0.5 7.9 2 8.7 3.2 8.5C4.9 8.2 5.4 6.2 4.4 5.1C3.4 4.2 2 4.9 2 6.1C2 7 2.7 7.4 3.1 7.4" stroke-width="0.7"/><path d="M3.1 1.6C1.7 3.3 0.3 4.5 0.4 6.2C0.5 7.9 2 8.7 3.2 8.5" stroke-width="1.0"/></g><circle cx="165.20" cy="390.10" r="0.8" fill="#1a1a1a"/><g transform="translate(163.70,411.10)"><path d="M0.7 2.3C0.3 0.6 1.4 -0.1 2.4 0C4.0 0.1 4.6 1.6 4.3 3.0C3.9 4.8 2.2 6 0.3 6.8" fill="none" stroke="#1a1a1a" stroke-width="0.55" stroke-linecap="round"/><path d="M3.3 0.3C4.4 0.9 4.6 2.6 4.0 3.9" fill="none" stroke="#1a1a1a" stroke-width="0.95"/><circle cx="1.2" cy="2.1" r="0.8" fill="#1a1a1a"/><circle cx="5.7" cy="1" r="0.38" fill="#1a1a1a"/><circle cx="5.7" cy="3.1" r="0.38" fill="#1a1a1a"/></g><g transform="translate(170.90,384.20)" fill="none" stroke="#1a1a1a"><path d="M0 -3.2V1.3" stroke-width="0.35"/><path d="M0 -0.3Q0.9 -1.1 1.5 -0.5Q1.8 0.3 0 1.3" stroke-width="0.5"/></g><g transform="translate(170.90,417.25)" fill="none" stroke="#1a1a1a"><path d="M0 -3.2V1.3" stroke-width="0.35"/><path d="M0 -0.3Q0.9 -1.1 1.5 -0.5Q1.8 0.3 0 1.3" stroke-width="0.5"/></g><text x="162.90" y="376.90" font-size="3.2" fill="#333" class="s" font-style="italic">5</text><ellipse cx="178.90" cy="386.76" rx="1.32" ry="0.94" fill="#1a1a1a" transform="rotate(-24 178.90 386.76)"/><rect x="179.94" y="379.76" width="0.32" height="6.70" fill="#4a4a4a"/><ellipse cx="178.90" cy="389.53" rx="1.32" ry="0.94" fill="#1a1a1a" transform="rotate(-24 178.90 389.53)"/><rect x="177.49" y="389.83" width="0.32" height="3.90" fill="#6a6a6a"/><ellipse cx="191.80" cy="386.76" rx="1.15" ry="0.75" fill="none" stroke="#1a1a1a" stroke-width="0.5" transform="rotate(-24 191.80 386.76)"/><rect x="192.84" y="379.76" width="0.32" height="6.70" fill="#4a4a4a"/><ellipse cx="191.80" cy="388.30" rx="1.15" ry="0.75" fill="none" stroke="#1a1a1a" stroke-width="0.5" transform="rotate(-24 191.80 388.30)"/><rect x="190.39" y="388.60" width="0.32" height="3.90" fill="#6a6a6a"/><ellipse cx="210.60" cy="386.76" rx="1.15" ry="0.75" fill="none" stroke="#1a1a1a" stroke-width="0.5" transform="rotate(-24 210.60 386.76)"/><rect x="211.64" y="379.76" width="0.32" height="6.70" fill="#4a4a4a"/><ellipse cx="210.60" cy="388.30" rx="1.15" ry="0.75" fill="none" stroke="#1a1a1a" stroke-width="0.5" transform="rotate(-24 210.60 388.30)"/><rect x="209.19" y="388.60" width="0.32" height="3.90" fill="#6a6a6a"/><ellipse cx="230.10" cy="386.76" rx="1.32" ry="0.94" fill="#1a1a1a" transform="rotate(-24 230.10 386.76)"/><rect x="231.14" y="379.76" width="0.32" height="6.70" fill="#4a4a4a"/><ellipse cx="286.90" cy="386.76" rx="1.32" ry="0.94" fill="#1a1a1a" transform="rotate(-24 286.90 386.76)"/><rect x="287.94" y="379.76" width="0.32" height="6.70" fill="#4a4a4a"/><ellipse cx="286.90" cy="386.76" rx="1.32" ry="0.94" fill="#1a1a1a" transform="rotate(-24 286.90 386.76)"/><rect x="285.49" y="387.06" width="0.32" height="3.90" fill="#6a6a6a"/><ellipse cx="299.10" cy="386.76" rx="1.32" ry="0.94" fill="#1a1a1a" transform="rotate(-24 299.10 386.76)"/><rect x="300.14" y="379.76" width="0.32" height="6.70" fill="#4a4a4a"/><ellipse cx="299.10" cy="386.76" rx="1.32" ry="0.94" fill="#1a1a1a" transform="rotate(-24 299.10 386.76)"/><rect x="297.69" y="387.06" width="0.32" height="3.90" fill="#6a6a6a"/><ellipse cx="312.10" cy="386.76" rx="1.32" ry="0.94" fill="#1a1a1a" transform="rotate(-24 312.10 386.76)"/><rect x="313.14" y="379.76" width="0.32" height="6.70" fill="#4a4a4a"/><ellipse cx="312.10" cy="386.76" rx="1.32" ry="0.94" fill="#1a1a1a" transform="rotate(-24 312.10 386.76)"/><rect x="310.69" y="387.06" width="0.32" height="3.90" fill="#6a6a6a"/><ellipse cx="323.70" cy="385.23" rx="1.32" ry="0.94" fill="#1a1a1a" transform="rotate(-24 323.70 385.23)"/><ellipse cx="323.70" cy="386.87" rx="1.32" ry="0.94" fill="#1a1a1a" transform="rotate(-24 323.70 386.87)"/><rect x="324.74" y="378.23" width="0.32" height="8.34" fill="#4a4a4a"/><ellipse cx="335.70" cy="384.81" rx="1.15" ry="0.75" fill="none" stroke="#1a1a1a" stroke-width="0.5" transform="rotate(-24 335.70 384.81)"/><rect x="336.74" y="377.81" width="0.32" height="6.70" fill="#4a4a4a"/><ellipse cx="335.70" cy="387.28" rx="1.15" ry="0.75" fill="none" stroke="#1a1a1a" stroke-width="0.5" transform="rotate(-24 335.70 387.28)"/><rect x="334.29" y="387.58" width="0.32" height="3.90" fill="#6a6a6a"/><ellipse cx="355.10" cy="385.23" rx="1.32" ry="0.94" fill="#1a1a1a" transform="rotate(-24 355.10 385.23)"/><rect x="356.14" y="378.23" width="0.32" height="6.70" fill="#4a4a4a"/><ellipse cx="355.10" cy="387.28" rx="1.32" ry="0.94" fill="#1a1a1a" transform="rotate(-24 355.10 387.28)"/><rect x="353.69" y="387.58" width="0.32" height="3.90" fill="#6a6a6a"/><ellipse cx="367.30" cy="385.23" rx="1.32" ry="0.94" fill="#1a1a1a" transform="rotate(-24 367.30 385.23)"/><rect x="368.34" y="378.23" width="0.32" height="6.70" fill="#4a4a4a"/><ellipse cx="367.30" cy="387.28" rx="1.32" ry="0.94" fill="#1a1a1a" transform="rotate(-24 367.30 387.28)"/><rect x="365.89" y="387.58" width="0.32" height="3.90" fill="#6a6a6a"/><ellipse cx="379.60" cy="384.81" rx="1.15" ry="0.75" fill="none" stroke="#1a1a1a" stroke-width="0.5" transform="rotate(-24 379.60 384.81)"/><rect x="380.64" y="377.81" width="0.32" height="6.70" fill="#4a4a4a"/><ellipse cx="379.60" cy="387.28" rx="1.15" ry="0.75" fill="none" stroke="#1a1a1a" stroke-width="0.5" transform="rotate(-24 379.60 387.28)"/><rect x="378.19" y="387.58" width="0.32" height="3.90" fill="#6a6a6a"/><ellipse cx="309.80" cy="386.76" rx="1.32" ry="0.94" fill="#1a1a1a" transform="rotate(-24 309.80 386.76)"/><rect x="228.67" y="387.10" width="0.35" height="6.50" fill="#1a1a1a"/><rect x="322.27" y="386.10" width="0.35" height="7.00" fill="#1a1a1a"/><g fill="#1a1a1a"><rect x="251.50" y="385.90" width="0.9" height="3.6"/><rect x="253.20" y="385.90" width="0.9" height="3.6"/><rect x="252.20" y="386.60" width="1.2" height="0.35"/><rect x="252.20" y="388.45" width="1.2" height="0.35"/></g><g fill="#1a1a1a"><rect x="255.10" y="385.90" width="0.9" height="3.6"/><rect x="256.80" y="385.90" width="0.9" height="3.6"/><rect x="255.80" y="386.60" width="1.2" height="0.35"/><rect x="255.80" y="388.45" width="1.2" height="0.35"/></g><path d="M191.40 387.50C191.99 374.27 210.61 374.27 211.20 384.50" fill="none" stroke="#303030" stroke-width="0.36"/><path d="M191.40 388.70C191.96 397.73 209.44 397.73 210.00 388.10" fill="none" stroke="#303030" stroke-width="0.36"/><path d="M191.40 416.90C191.96 425.20 209.64 425.20 210.20 418.30" fill="none" stroke="#303030" stroke-width="0.36"/><ellipse cx="178.90" cy="411.72" rx="1.32" ry="0.94" fill="#1a1a1a" transform="rotate(-24 178.90 411.72)"/><rect x="179.94" y="405.72" width="0.32" height="5.70" fill="#4a4a4a"/><ellipse cx="178.90" cy="413.56" rx="1.32" ry="0.94" fill="#1a1a1a" transform="rotate(-24 178.90 413.56)"/><rect x="177.49" y="413.86" width="0.32" height="3.90" fill="#6a6a6a"/><ellipse cx="230.10" cy="411.72" rx="1.32" ry="0.94" fill="#1a1a1a" transform="rotate(-24 230.10 411.72)"/><rect x="231.14" y="405.72" width="0.32" height="5.70" fill="#4a4a4a"/><ellipse cx="230.10" cy="413.56" rx="1.32" ry="0.94" fill="#1a1a1a" transform="rotate(-24 230.10 413.56)"/><rect x="228.69" y="413.86" width="0.32" height="3.90" fill="#6a6a6a"/><ellipse cx="286.90" cy="411.72" rx="1.32" ry="0.94" fill="#1a1a1a" transform="rotate(-24 286.90 411.72)"/><rect x="287.94" y="405.72" width="0.32" height="5.70" fill="#4a4a4a"/><ellipse cx="286.90" cy="413.56" rx="1.32" ry="0.94" fill="#1a1a1a" transform="rotate(-24 286.90 413.56)"/><rect x="285.49" y="413.86" width="0.32" height="3.90" fill="#6a6a6a"/><ellipse cx="299.10" cy="411.72" rx="1.32" ry="0.94" fill="#1a1a1a" transform="rotate(-24 299.10 411.72)"/><rect x="300.14" y="405.72" width="0.32" height="5.70" fill="#4a4a4a"/><ellipse cx="299.10" cy="413.56" rx="1.32" ry="0.94" fill="#1a1a1a" transform="rotate(-24 299.10 413.56)"/><rect x="297.69" y="413.86" width="0.32" height="3.90" fill="#6a6a6a"/><ellipse cx="312.10" cy="410.59" rx="1.32" ry="0.94" fill="#1a1a1a" transform="rotate(-24 312.10 410.59)"/><rect x="313.14" y="404.59" width="0.32" height="5.70" fill="#4a4a4a"/><ellipse cx="312.10" cy="413.15" rx="1.32" ry="0.94" fill="#1a1a1a" transform="rotate(-24 312.10 413.15)"/><rect x="310.69" y="413.45" width="0.32" height="3.90" fill="#6a6a6a"/><ellipse cx="323.70" cy="409.67" rx="1.32" ry="0.94" fill="#1a1a1a" transform="rotate(-24 323.70 409.67)"/><rect x="324.74" y="403.67" width="0.32" height="5.70" fill="#4a4a4a"/><ellipse cx="323.70" cy="413.15" rx="1.32" ry="0.94" fill="#1a1a1a" transform="rotate(-24 323.70 413.15)"/><rect x="322.29" y="413.45" width="0.32" height="3.90" fill="#6a6a6a"/><ellipse cx="335.70" cy="408.44" rx="1.15" ry="0.75" fill="none" stroke="#1a1a1a" stroke-width="0.5" transform="rotate(-24 335.70 408.44)"/><rect x="336.74" y="402.44" width="0.32" height="5.70" fill="#4a4a4a"/><ellipse cx="335.70" cy="416.23" rx="1.15" ry="0.75" fill="none" stroke="#1a1a1a" stroke-width="0.5" transform="rotate(-24 335.70 416.23)"/><rect x="334.29" y="416.53" width="0.32" height="3.90" fill="#6a6a6a"/><ellipse cx="355.10" cy="409.05" rx="1.32" ry="0.94" fill="#1a1a1a" transform="rotate(-24 355.10 409.05)"/><rect x="356.14" y="403.05" width="0.32" height="5.70" fill="#4a4a4a"/><ellipse cx="355.10" cy="416.23" rx="1.32" ry="0.94" fill="#1a1a1a" transform="rotate(-24 355.10 416.23)"/><rect x="353.69" y="416.53" width="0.32" height="3.90" fill="#6a6a6a"/><ellipse cx="367.30" cy="409.05" rx="1.32" ry="0.94" fill="#1a1a1a" transform="rotate(-24 367.30 409.05)"/><rect x="368.34" y="403.05" width="0.32" height="5.70" fill="#4a4a4a"/><ellipse cx="367.30" cy="416.23" rx="1.32" ry="0.94" fill="#1a1a1a" transform="rotate(-24 367.30 416.23)"/><rect x="365.89" y="416.53" width="0.32" height="3.90" fill="#6a6a6a"/><ellipse cx="379.60" cy="408.44" rx="1.15" ry="0.75" fill="none" stroke="#1a1a1a" stroke-width="0.5" transform="rotate(-24 379.60 408.44)"/><rect x="380.64" y="402.44" width="0.32" height="5.70" fill="#4a4a4a"/><ellipse cx="379.60" cy="416.23" rx="1.15" ry="0.75" fill="none" stroke="#1a1a1a" stroke-width="0.5" transform="rotate(-24 379.60 416.23)"/><rect x="378.19" y="416.53" width="0.32" height="3.90" fill="#6a6a6a"/><ellipse cx="191.8" cy="409.50" rx="1.3" ry="0.8" fill="none" stroke="#1a1a1a" stroke-width="0.55"/><ellipse cx="191.80" cy="415.81" rx="1.15" ry="0.75" fill="none" stroke="#1a1a1a" stroke-width="0.5" transform="rotate(-24 191.80 415.81)"/><rect x="190.39" y="416.12" width="0.32" height="5.20" fill="#3a3a3a"/><ellipse cx="210.60" cy="413.77" rx="1.15" ry="0.75" fill="none" stroke="#1a1a1a" stroke-width="0.5" transform="rotate(-24 210.60 413.77)"/><rect x="209.19" y="414.07" width="0.32" height="6.20" fill="#3a3a3a"/><g fill="#1a1a1a"><rect x="252.00" y="409.90" width="0.9" height="3.6"/><rect x="253.70" y="409.90" width="0.9" height="3.6"/><rect x="252.70" y="410.60" width="1.2" height="0.35"/><rect x="252.70" y="412.45" width="1.2" height="0.35"/></g><g fill="#1a1a1a"><rect x="252.00" y="412.05" width="0.9" height="3.6"/><rect x="253.70" y="412.05" width="0.9" height="3.6"/><rect x="252.70" y="412.75" width="1.2" height="0.35"/><rect x="252.70" y="414.60" width="1.2" height="0.35"/></g><text x="175.30" y="400.40" font-size="5.1" fill="#262626" stroke="#262626" stroke-width="0.05" class="s" textLength="7.20" lengthAdjust="spacingAndGlyphs">The</text><text x="190.00" y="400.40" font-size="5.1" fill="#262626" stroke="#262626" stroke-width="0.05" class="s" textLength="7.50" lengthAdjust="spacingAndGlyphs">pow</text><text x="211.60" y="400.40" font-size="5.1" fill="#777" stroke="#777" stroke-width="0.05" class="s">-</text><text x="227.00" y="400.40" font-size="5.1" fill="#262626" stroke="#262626" stroke-width="0.05" class="s" textLength="43.80" lengthAdjust="spacingAndGlyphs">ers of Heaven therefore</text><text x="281.70" y="400.40" font-size="5.1" fill="#262626" stroke="#262626" stroke-width="0.05" class="s" textLength="9.60" lengthAdjust="spacingAndGlyphs">cried</text><text x="297.00" y="400.40" font-size="5.1" fill="#262626" stroke="#262626" stroke-width="0.05" class="s" textLength="4.00" lengthAdjust="spacingAndGlyphs">to</text><text x="306.00" y="400.40" font-size="5.1" fill="#262626" stroke="#262626" stroke-width="0.05" class="s" textLength="10.80" lengthAdjust="spacingAndGlyphs">Thee,</text><text x="321.50" y="400.40" font-size="5.1" fill="#262626" stroke="#262626" stroke-width="0.05" class="s" textLength="3.30" lengthAdjust="spacingAndGlyphs">O</text><text x="332.00" y="400.40" font-size="5.1" fill="#262626" stroke="#262626" stroke-width="0.05" class="s" textLength="6.90" lengthAdjust="spacingAndGlyphs">Giv</text><text x="345.20" y="400.40" font-size="5.1" fill="#777" stroke="#777" stroke-width="0.05" class="s">-</text><text x="352.50" y="400.40" font-size="5.1" fill="#262626" stroke="#262626" stroke-width="0.05" class="s" textLength="4.10" lengthAdjust="spacingAndGlyphs">er</text><text x="364.80" y="400.40" font-size="5.1" fill="#262626" stroke="#262626" stroke-width="0.05" class="s" textLength="3.90" lengthAdjust="spacingAndGlyphs">of</text><text x="376.40" y="400.40" font-size="5.1" fill="#262626" stroke="#262626" stroke-width="0.05" class="s" textLength="6.60" lengthAdjust="spacingAndGlyphs">life:</text><rect x="386.50" y="378.40" width="0.6" height="0.6" fill="#999"/><rect x="386.50" y="409.40" width="0.6" height="0.6" fill="#999"/><text x="425.8" y="150.6" font-size="4.4" fill="#222" stroke="#222" stroke-width="0.1" class="s">2</text><path d="M427.20 160.15H662.50v0.4H427.20ZM427.20 162.20H662.50v0.4H427.20ZM427.20 164.25H662.50v0.4H427.20ZM427.20 166.30H662.50v0.4H427.20ZM427.20 168.35H662.50v0.4H427.20Z" fill="#858585"/><path d="M427.20 192.15H662.50v0.4H427.20ZM427.20 194.20H662.50v0.4H427.20ZM427.20 196.25H662.50v0.4H427.20ZM427.20 198.30H662.50v0.4H427.20ZM427.20 200.35H662.50v0.4H427.20Z" fill="#858585"/><rect x="426.10" y="158.75" width="1" height="43.40" fill="#2a2a2a"/><path d="M426.10 158.95Q428.00 158.55 429.20 157.35M426.10 201.95Q428.00 202.35 429.20 203.55" stroke="#1a1a1a" stroke-width="0.6" fill="none"/><rect x="662.30" y="160.35" width="0.40" height="8.20" fill="#1a1a1a"/><rect x="662.30" y="192.35" width="0.40" height="8.20" fill="#1a1a1a"/><g transform="translate(428.10,159.80) scale(1.1)" fill="none" stroke="#1a1a1a" stroke-linecap="round" stroke-linejoin="round"><path d="M1.4 9.3C1.4 10.9 3.9 11 3.8 9.2L2.7 -0.4C2.5 -2.3 3.4 -3.1 3.8 -2.7C4.4 -1.6 4.1 0.3 3.1 1.6C1.7 3.3 0.3 4.5 0.4 6.2C0.5 7.9 2 8.7 3.2 8.5C4.9 8.2 5.4 6.2 4.4 5.1C3.4 4.2 2 4.9 2 6.1C2 7 2.7 7.4 3.1 7.4" stroke-width="0.7"/><path d="M3.1 1.6C1.7 3.3 0.3 4.5 0.4 6.2C0.5 7.9 2 8.7 3.2 8.5" stroke-width="1.0"/></g><circle cx="430.10" cy="170.35" r="0.8" fill="#1a1a1a"/><g transform="translate(428.60,192.35)"><path d="M0.7 2.3C0.3 0.6 1.4 -0.1 2.4 0C4.0 0.1 4.6 1.6 4.3 3.0C3.9 4.8 2.2 6 0.3 6.8" fill="none" stroke="#1a1a1a" stroke-width="0.55" stroke-linecap="round"/><path d="M3.3 0.3C4.4 0.9 4.6 2.6 4.0 3.9" fill="none" stroke="#1a1a1a" stroke-width="0.95"/><circle cx="1.2" cy="2.1" r="0.8" fill="#1a1a1a"/><circle cx="5.7" cy="1" r="0.38" fill="#1a1a1a"/><circle cx="5.7" cy="3.1" r="0.38" fill="#1a1a1a"/></g><g transform="translate(435.80,164.45)" fill="none" stroke="#1a1a1a"><path d="M0 -3.2V1.3" stroke-width="0.35"/><path d="M0 -0.3Q0.9 -1.1 1.5 -0.5Q1.8 0.3 0 1.3" stroke-width="0.5"/></g><g transform="translate(435.80,198.50)" fill="none" stroke="#1a1a1a"><path d="M0 -3.2V1.3" stroke-width="0.35"/><path d="M0 -0.3Q0.9 -1.1 1.5 -0.5Q1.8 0.3 0 1.3" stroke-width="0.5"/></g><text x="427.80" y="157.15" font-size="3.2" fill="#333" class="s" font-style="italic">6</text><rect x="573.50" y="160.35" width="0.40" height="8.20" fill="#1a1a1a"/><rect x="573.50" y="192.35" width="0.40" height="8.20" fill="#1a1a1a"/><ellipse cx="443.90" cy="165.47" rx="1.32" ry="0.94" fill="#1a1a1a" transform="rotate(-24 443.90 165.47)"/><ellipse cx="443.90" cy="167.53" rx="1.32" ry="0.94" fill="#1a1a1a" transform="rotate(-24 443.90 167.53)"/><rect x="444.94" y="158.47" width="0.32" height="8.75" fill="#4a4a4a"/><ellipse cx="500.60" cy="167.01" rx="1.15" ry="0.75" fill="none" stroke="#1a1a1a" stroke-width="0.5" transform="rotate(-24 500.60 167.01)"/><rect x="501.64" y="160.01" width="0.32" height="6.70" fill="#4a4a4a"/><ellipse cx="523.60" cy="165.47" rx="1.32" ry="0.94" fill="#1a1a1a" transform="rotate(-24 523.60 165.47)"/><ellipse cx="523.60" cy="167.53" rx="1.32" ry="0.94" fill="#1a1a1a" transform="rotate(-24 523.60 167.53)"/><rect x="524.64" y="158.47" width="0.32" height="8.75" fill="#4a4a4a"/><ellipse cx="537.80" cy="165.47" rx="1.32" ry="0.94" fill="#1a1a1a" transform="rotate(-24 537.80 165.47)"/><ellipse cx="537.80" cy="167.53" rx="1.32" ry="0.94" fill="#1a1a1a" transform="rotate(-24 537.80 167.53)"/><rect x="538.84" y="158.47" width="0.32" height="8.75" fill="#4a4a4a"/><ellipse cx="552.50" cy="165.47" rx="1.15" ry="0.75" fill="none" stroke="#1a1a1a" stroke-width="0.5" transform="rotate(-24 552.50 165.47)"/><rect x="553.54" y="158.47" width="0.32" height="6.70" fill="#4a4a4a"/><ellipse cx="552.50" cy="168.14" rx="1.15" ry="0.75" fill="none" stroke="#1a1a1a" stroke-width="0.5" transform="rotate(-24 552.50 168.14)"/><rect x="551.09" y="168.44" width="0.32" height="3.90" fill="#6a6a6a"/><ellipse cx="578.10" cy="167.01" rx="1.15" ry="0.75" fill="none" stroke="#1a1a1a" stroke-width="0.5" transform="rotate(-24 578.10 167.01)"/><rect x="579.14" y="160.01" width="0.32" height="6.70" fill="#4a4a4a"/><ellipse cx="578.10" cy="169.57" rx="1.15" ry="0.75" fill="none" stroke="#1a1a1a" stroke-width="0.5" transform="rotate(-24 578.10 169.57)"/><rect x="576.69" y="169.88" width="0.32" height="3.90" fill="#6a6a6a"/><ellipse cx="592.50" cy="167.01" rx="1.15" ry="0.75" fill="none" stroke="#1a1a1a" stroke-width="0.5" transform="rotate(-24 592.50 167.01)"/><rect x="593.54" y="160.01" width="0.32" height="6.70" fill="#4a4a4a"/><ellipse cx="592.50" cy="168.55" rx="1.15" ry="0.75" fill="none" stroke="#1a1a1a" stroke-width="0.5" transform="rotate(-24 592.50 168.55)"/><rect x="591.09" y="168.85" width="0.32" height="3.90" fill="#6a6a6a"/><ellipse cx="607.10" cy="167.01" rx="1.32" ry="0.94" fill="#1a1a1a" transform="rotate(-24 607.10 167.01)"/><rect x="608.14" y="160.01" width="0.32" height="6.70" fill="#4a4a4a"/><ellipse cx="607.10" cy="167.01" rx="1.32" ry="0.94" fill="#1a1a1a" transform="rotate(-24 607.10 167.01)"/><rect x="605.69" y="167.31" width="0.32" height="3.90" fill="#6a6a6a"/><ellipse cx="617.10" cy="167.01" rx="1.32" ry="0.94" fill="#1a1a1a" transform="rotate(-24 617.10 167.01)"/><rect x="618.14" y="160.01" width="0.32" height="6.70" fill="#4a4a4a"/><ellipse cx="617.10" cy="167.01" rx="1.32" ry="0.94" fill="#1a1a1a" transform="rotate(-24 617.10 167.01)"/><rect x="615.69" y="167.31" width="0.32" height="3.90" fill="#6a6a6a"/><ellipse cx="625.80" cy="165.47" rx="1.32" ry="0.94" fill="#1a1a1a" transform="rotate(-24 625.80 165.47)"/><ellipse cx="625.80" cy="167.11" rx="1.32" ry="0.94" fill="#1a1a1a" transform="rotate(-24 625.80 167.11)"/><rect x="626.84" y="158.47" width="0.32" height="8.34" fill="#4a4a4a"/><ellipse cx="634.80" cy="165.06" rx="1.15" ry="0.75" fill="none" stroke="#1a1a1a" stroke-width="0.5" transform="rotate(-24 634.80 165.06)"/><rect x="635.84" y="158.06" width="0.32" height="6.70" fill="#4a4a4a"/><ellipse cx="634.80" cy="167.53" rx="1.15" ry="0.75" fill="none" stroke="#1a1a1a" stroke-width="0.5" transform="rotate(-24 634.80 167.53)"/><rect x="633.39" y="167.83" width="0.32" height="3.90" fill="#6a6a6a"/><ellipse cx="649.60" cy="165.06" rx="1.15" ry="0.75" fill="none" stroke="#1a1a1a" stroke-width="0.5" transform="rotate(-24 649.60 165.06)"/><rect x="650.64" y="158.06" width="0.32" height="6.70" fill="#4a4a4a"/><ellipse cx="649.60" cy="167.53" rx="1.15" ry="0.75" fill="none" stroke="#1a1a1a" stroke-width="0.5" transform="rotate(-24 649.60 167.53)"/><rect x="648.19" y="167.83" width="0.32" height="3.90" fill="#6a6a6a"/><ellipse cx="614.80" cy="167.01" rx="1.32" ry="0.94" fill="#1a1a1a" transform="rotate(-24 614.80 167.01)"/><rect x="442.47" y="166.85" width="0.35" height="7.00" fill="#1a1a1a"/><rect x="499.18" y="166.85" width="0.35" height="7.00" fill="#1a1a1a"/><rect x="522.18" y="166.85" width="0.35" height="7.00" fill="#1a1a1a"/><rect x="536.38" y="166.85" width="0.35" height="7.00" fill="#1a1a1a"/><rect x="624.38" y="166.85" width="0.35" height="7.00" fill="#1a1a1a"/><g fill="#1a1a1a"><rect x="461.00" y="164.70" width="0.9" height="3.6"/><rect x="462.70" y="164.70" width="0.9" height="3.6"/><rect x="461.70" y="165.40" width="1.2" height="0.35"/><rect x="461.70" y="167.25" width="1.2" height="0.35"/></g><path d="M577.70 167.75C578.16 154.18 592.64 154.18 593.10 164.75" fill="none" stroke="#303030" stroke-width="0.36"/><path d="M577.70 168.95C578.13 175.52 591.47 175.52 591.90 168.35" fill="none" stroke="#303030" stroke-width="0.36"/><path d="M577.70 198.15C578.13 205.72 591.67 205.72 592.10 199.55" fill="none" stroke="#303030" stroke-width="0.36"/><ellipse cx="443.90" cy="191.12" rx="1.32" ry="0.94" fill="#1a1a1a" transform="rotate(-24 443.90 191.12)"/><rect x="444.94" y="185.12" width="0.32" height="5.70" fill="#4a4a4a"/><ellipse cx="443.90" cy="193.99" rx="1.32" ry="0.94" fill="#1a1a1a" transform="rotate(-24 443.90 193.99)"/><rect x="442.49" y="194.29" width="0.32" height="3.90" fill="#6a6a6a"/><ellipse cx="500.60" cy="189.69" rx="1.15" ry="0.75" fill="none" stroke="#1a1a1a" stroke-width="0.5" transform="rotate(-24 500.60 189.69)"/><rect x="501.64" y="183.69" width="0.32" height="5.70" fill="#4a4a4a"/><ellipse cx="500.60" cy="197.47" rx="1.15" ry="0.75" fill="none" stroke="#1a1a1a" stroke-width="0.5" transform="rotate(-24 500.60 197.47)"/><rect x="499.19" y="197.78" width="0.32" height="3.90" fill="#6a6a6a"/><ellipse cx="523.60" cy="190.71" rx="1.32" ry="0.94" fill="#1a1a1a" transform="rotate(-24 523.60 190.71)"/><rect x="524.64" y="184.71" width="0.32" height="5.70" fill="#4a4a4a"/><ellipse cx="523.60" cy="196.45" rx="1.32" ry="0.94" fill="#1a1a1a" transform="rotate(-24 523.60 196.45)"/><rect x="522.19" y="196.75" width="0.32" height="3.90" fill="#6a6a6a"/><ellipse cx="537.80" cy="190.71" rx="1.32" ry="0.94" fill="#1a1a1a" transform="rotate(-24 537.80 190.71)"/><rect x="538.84" y="184.71" width="0.32" height="5.70" fill="#4a4a4a"/><ellipse cx="537.80" cy="196.45" rx="1.32" ry="0.94" fill="#1a1a1a" transform="rotate(-24 537.80 196.45)"/><rect x="536.39" y="196.75" width="0.32" height="3.90" fill="#6a6a6a"/><ellipse cx="552.50" cy="193.89" rx="1.15" ry="0.75" fill="none" stroke="#1a1a1a" stroke-width="0.5" transform="rotate(-24 552.50 193.89)"/><rect x="553.54" y="187.89" width="0.32" height="5.70" fill="#4a4a4a"/><ellipse cx="607.10" cy="192.97" rx="1.32" ry="0.94" fill="#1a1a1a" transform="rotate(-24 607.10 192.97)"/><rect x="608.14" y="186.97" width="0.32" height="5.70" fill="#4a4a4a"/><ellipse cx="607.10" cy="194.81" rx="1.32" ry="0.94" fill="#1a1a1a" transform="rotate(-24 607.10 194.81)"/><rect x="605.69" y="195.11" width="0.32" height="3.90" fill="#6a6a6a"/><ellipse cx="617.10" cy="191.84" rx="1.32" ry="0.94" fill="#1a1a1a" transform="rotate(-24 617.10 191.84)"/><rect x="618.14" y="185.84" width="0.32" height="5.70" fill="#4a4a4a"/><ellipse cx="617.10" cy="194.40" rx="1.32" ry="0.94" fill="#1a1a1a" transform="rotate(-24 617.10 194.40)"/><rect x="615.69" y="194.70" width="0.32" height="3.90" fill="#6a6a6a"/><ellipse cx="625.80" cy="190.91" rx="1.32" ry="0.94" fill="#1a1a1a" transform="rotate(-24 625.80 190.91)"/><rect x="626.84" y="184.91" width="0.32" height="5.70" fill="#4a4a4a"/><ellipse cx="625.80" cy="194.40" rx="1.32" ry="0.94" fill="#1a1a1a" transform="rotate(-24 625.80 194.40)"/><rect x="624.39" y="194.70" width="0.32" height="3.90" fill="#6a6a6a"/><ellipse cx="634.80" cy="189.69" rx="1.15" ry="0.75" fill="none" stroke="#1a1a1a" stroke-width="0.5" transform="rotate(-24 634.80 189.69)"/><rect x="635.84" y="183.69" width="0.32" height="5.70" fill="#4a4a4a"/><ellipse cx="634.80" cy="197.47" rx="1.15" ry="0.75" fill="none" stroke="#1a1a1a" stroke-width="0.5" transform="rotate(-24 634.80 197.47)"/><rect x="633.39" y="197.78" width="0.32" height="3.90" fill="#6a6a6a"/><ellipse cx="649.60" cy="189.69" rx="1.15" ry="0.75" fill="none" stroke="#1a1a1a" stroke-width="0.5" transform="rotate(-24 649.60 189.69)"/><rect x="650.64" y="183.69" width="0.32" height="5.70" fill="#4a4a4a"/><ellipse cx="649.60" cy="197.47" rx="1.15" ry="0.75" fill="none" stroke="#1a1a1a" stroke-width="0.5" transform="rotate(-24 649.60 197.47)"/><rect x="648.19" y="197.78" width="0.32" height="3.90" fill="#6a6a6a"/><g fill="#1a1a1a"><rect x="461.00" y="190.15" width="0.9" height="3.6"/><rect x="462.70" y="190.15" width="0.9" height="3.6"/><rect x="461.70" y="190.85" width="1.2" height="0.35"/><rect x="461.70" y="192.70" width="1.2" height="0.35"/></g><g fill="#1a1a1a"><rect x="461.00" y="192.60" width="0.9" height="3.6"/><rect x="462.70" y="192.60" width="0.9" height="3.6"/><rect x="461.70" y="193.30" width="1.2" height="0.35"/><rect x="461.70" y="195.15" width="1.2" height="0.35"/></g><ellipse cx="578.1" cy="190.75" rx="1.3" ry="0.8" fill="none" stroke="#1a1a1a" stroke-width="0.55"/><ellipse cx="578.10" cy="197.06" rx="1.15" ry="0.75" fill="none" stroke="#1a1a1a" stroke-width="0.5" transform="rotate(-24 578.10 197.06)"/><rect x="576.69" y="197.37" width="0.32" height="5.20" fill="#3a3a3a"/><ellipse cx="592.50" cy="195.01" rx="1.15" ry="0.75" fill="none" stroke="#1a1a1a" stroke-width="0.5" transform="rotate(-24 592.50 195.01)"/><rect x="591.09" y="195.31" width="0.32" height="6.20" fill="#3a3a3a"/><text x="436.30" y="180.10" font-size="5.1" fill="#262626" stroke="#262626" stroke-width="0.05" class="s" textLength="34.70" lengthAdjust="spacingAndGlyphs">Glory to Thy resur</text><text x="484.40" y="180.10" font-size="5.1" fill="#777" stroke="#777" stroke-width="0.05" class="s">-</text><text x="498.80" y="180.10" font-size="5.1" fill="#262626" stroke="#262626" stroke-width="0.05" class="s" textLength="5.00" lengthAdjust="spacingAndGlyphs">rec</text><text x="511.60" y="180.10" font-size="5.1" fill="#777" stroke="#777" stroke-width="0.05" class="s">-</text><text x="520.00" y="180.10" font-size="5.1" fill="#262626" stroke="#262626" stroke-width="0.05" class="s" textLength="7.70" lengthAdjust="spacingAndGlyphs">tion,</text><text x="536.00" y="180.10" font-size="5.1" fill="#262626" stroke="#262626" stroke-width="0.05" class="s" textLength="3.20" lengthAdjust="spacingAndGlyphs">O</text><text x="545.70" y="180.10" font-size="5.1" fill="#262626" stroke="#262626" stroke-width="0.05" class="s" textLength="13.30" lengthAdjust="spacingAndGlyphs">Christ!</text><text x="576.60" y="180.10" font-size="5.1" fill="#262626" stroke="#262626" stroke-width="0.05" class="s" textLength="6.80" lengthAdjust="spacingAndGlyphs">Glo</text><text x="593.70" y="180.10" font-size="5.1" fill="#777" stroke="#777" stroke-width="0.05" class="s">-</text><text x="604.80" y="180.10" font-size="5.1" fill="#262626" stroke="#262626" stroke-width="0.05" class="s" textLength="3.80" lengthAdjust="spacingAndGlyphs">ry</text><text x="614.30" y="180.10" font-size="5.1" fill="#262626" stroke="#262626" stroke-width="0.05" class="s" textLength="3.70" lengthAdjust="spacingAndGlyphs">in</text><text x="621.50" y="180.10" font-size="5.1" fill="#262626" stroke="#262626" stroke-width="0.05" class="s" textLength="17.90" lengthAdjust="spacingAndGlyphs">Thy King</text><text x="642.30" y="180.10" font-size="5.1" fill="#777" stroke="#777" stroke-width="0.05" class="s">-</text><text x="645.30" y="180.10" font-size="5.1" fill="#262626" stroke="#262626" stroke-width="0.05" class="s" textLength="9.60" lengthAdjust="spacingAndGlyphs">dom!</text><rect x="655.3" y="151" width="4.8" height="4.6" fill="#f0f0f0" stroke="#c4c4c4" stroke-width="0.4"/><path d="M658.9 152.4V153.9H656.6999999999999M657.5 153.1L656.5999999999999 153.9L657.5 154.7" fill="none" stroke="#a8a8a8" stroke-width="0.4"/><rect x="656.50" y="158.65" width="0.6" height="0.6" fill="#999"/><rect x="656.50" y="190.65" width="0.6" height="0.6" fill="#999"/><rect x="569.90" y="158.65" width="0.6" height="0.6" fill="#999"/><rect x="569.90" y="190.65" width="0.6" height="0.6" fill="#999"/><path d="M427.20 228.15H662.50v0.4H427.20ZM427.20 230.20H662.50v0.4H427.20ZM427.20 232.25H662.50v0.4H427.20ZM427.20 234.30H662.50v0.4H427.20ZM427.20 236.35H662.50v0.4H427.20Z" fill="#858585"/><path d="M427.20 259.15H662.50v0.4H427.20ZM427.20 261.20H662.50v0.4H427.20ZM427.20 263.25H662.50v0.4H427.20ZM427.20 265.30H662.50v0.4H427.20ZM427.20 267.35H662.50v0.4H427.20Z" fill="#858585"/><rect x="426.10" y="226.75" width="1" height="42.40" fill="#2a2a2a"/><path d="M426.10 226.95Q428.00 226.55 429.20 225.35M426.10 268.95Q428.00 269.35 429.20 270.55" stroke="#1a1a1a" stroke-width="0.6" fill="none"/><rect x="660.10" y="228.35" width="0.40" height="8.20" fill="#1a1a1a"/><rect x="660.10" y="259.35" width="0.40" height="8.20" fill="#1a1a1a"/><rect x="661.45" y="228.35" width="1.10" height="8.20" fill="#1a1a1a"/><rect x="661.45" y="259.35" width="1.10" height="8.20" fill="#1a1a1a"/><g transform="translate(428.10,227.80) scale(1.1)" fill="none" stroke="#1a1a1a" stroke-linecap="round" stroke-linejoin="round"><path d="M1.4 9.3C1.4 10.9 3.9 11 3.8 9.2L2.7 -0.4C2.5 -2.3 3.4 -3.1 3.8 -2.7C4.4 -1.6 4.1 0.3 3.1 1.6C1.7 3.3 0.3 4.5 0.4 6.2C0.5 7.9 2 8.7 3.2 8.5C4.9 8.2 5.4 6.2 4.4 5.1C3.4 4.2 2 4.9 2 6.1C2 7 2.7 7.4 3.1 7.4" stroke-width="0.7"/><path d="M3.1 1.6C1.7 3.3 0.3 4.5 0.4 6.2C0.5 7.9 2 8.7 3.2 8.5" stroke-width="1.0"/></g><circle cx="430.10" cy="238.35" r="0.8" fill="#1a1a1a"/><g transform="translate(428.60,259.35)"><path d="M0.7 2.3C0.3 0.6 1.4 -0.1 2.4 0C4.0 0.1 4.6 1.6 4.3 3.0C3.9 4.8 2.2 6 0.3 6.8" fill="none" stroke="#1a1a1a" stroke-width="0.55" stroke-linecap="round"/><path d="M3.3 0.3C4.4 0.9 4.6 2.6 4.0 3.9" fill="none" stroke="#1a1a1a" stroke-width="0.95"/><circle cx="1.2" cy="2.1" r="0.8" fill="#1a1a1a"/><circle cx="5.7" cy="1" r="0.38" fill="#1a1a1a"/><circle cx="5.7" cy="3.1" r="0.38" fill="#1a1a1a"/></g><g transform="translate(435.80,232.45)" fill="none" stroke="#1a1a1a"><path d="M0 -3.2V1.3" stroke-width="0.35"/><path d="M0 -0.3Q0.9 -1.1 1.5 -0.5Q1.8 0.3 0 1.3" stroke-width="0.5"/></g><g transform="translate(435.80,265.50)" fill="none" stroke="#1a1a1a"><path d="M0 -3.2V1.3" stroke-width="0.35"/><path d="M0 -0.3Q0.9 -1.1 1.5 -0.5Q1.8 0.3 0 1.3" stroke-width="0.5"/></g><text x="427.80" y="225.15" font-size="3.2" fill="#333" class="s" font-style="italic">8</text><ellipse cx="444.40" cy="233.47" rx="1.32" ry="0.94" fill="#1a1a1a" transform="rotate(-24 444.40 233.47)"/><ellipse cx="444.40" cy="235.53" rx="1.32" ry="0.94" fill="#1a1a1a" transform="rotate(-24 444.40 235.53)"/><rect x="445.44" y="226.47" width="0.32" height="8.75" fill="#4a4a4a"/><ellipse cx="464.80" cy="233.47" rx="1.32" ry="0.94" fill="#1a1a1a" transform="rotate(-24 464.80 233.47)"/><ellipse cx="464.80" cy="235.53" rx="1.32" ry="0.94" fill="#1a1a1a" transform="rotate(-24 464.80 235.53)"/><rect x="465.84" y="226.47" width="0.32" height="8.75" fill="#4a4a4a"/><ellipse cx="556.90" cy="235.01" rx="1.15" ry="0.75" fill="none" stroke="#1a1a1a" stroke-width="0.5" transform="rotate(-24 556.90 235.01)"/><rect x="557.94" y="228.01" width="0.32" height="6.70" fill="#4a4a4a"/><ellipse cx="589.20" cy="233.47" rx="1.32" ry="0.94" fill="#1a1a1a" transform="rotate(-24 589.20 233.47)"/><ellipse cx="589.20" cy="235.53" rx="1.32" ry="0.94" fill="#1a1a1a" transform="rotate(-24 589.20 235.53)"/><rect x="590.24" y="226.47" width="0.32" height="8.75" fill="#4a4a4a"/><ellipse cx="609.60" cy="233.47" rx="1.32" ry="0.94" fill="#1a1a1a" transform="rotate(-24 609.60 233.47)"/><ellipse cx="609.60" cy="235.53" rx="1.32" ry="0.94" fill="#1a1a1a" transform="rotate(-24 609.60 235.53)"/><rect x="610.64" y="226.47" width="0.32" height="8.75" fill="#4a4a4a"/><ellipse cx="629.60" cy="233.47" rx="1.15" ry="0.75" fill="none" stroke="#1a1a1a" stroke-width="0.5" transform="rotate(-24 629.60 233.47)"/><rect x="630.64" y="226.47" width="0.32" height="6.70" fill="#4a4a4a"/><ellipse cx="629.60" cy="236.14" rx="1.15" ry="0.75" fill="none" stroke="#1a1a1a" stroke-width="0.5" transform="rotate(-24 629.60 236.14)"/><rect x="628.19" y="236.44" width="0.32" height="3.90" fill="#6a6a6a"/><rect x="442.97" y="234.85" width="0.35" height="7.00" fill="#1a1a1a"/><rect x="463.38" y="234.85" width="0.35" height="7.00" fill="#1a1a1a"/><rect x="555.48" y="234.85" width="0.35" height="7.00" fill="#1a1a1a"/><rect x="587.78" y="234.85" width="0.35" height="7.00" fill="#1a1a1a"/><rect x="608.18" y="234.85" width="0.35" height="7.00" fill="#1a1a1a"/><g fill="#1a1a1a"><rect x="498.10" y="232.70" width="0.9" height="3.6"/><rect x="499.80" y="232.70" width="0.9" height="3.6"/><rect x="498.80" y="233.40" width="1.2" height="0.35"/><rect x="498.80" y="235.25" width="1.2" height="0.35"/></g><ellipse cx="444.40" cy="258.12" rx="1.32" ry="0.94" fill="#1a1a1a" transform="rotate(-24 444.40 258.12)"/><rect x="445.44" y="252.12" width="0.32" height="5.70" fill="#4a4a4a"/><ellipse cx="444.40" cy="260.99" rx="1.32" ry="0.94" fill="#1a1a1a" transform="rotate(-24 444.40 260.99)"/><rect x="442.99" y="261.29" width="0.32" height="3.90" fill="#6a6a6a"/><ellipse cx="464.80" cy="258.12" rx="1.32" ry="0.94" fill="#1a1a1a" transform="rotate(-24 464.80 258.12)"/><rect x="465.84" y="252.12" width="0.32" height="5.70" fill="#4a4a4a"/><ellipse cx="464.80" cy="260.99" rx="1.32" ry="0.94" fill="#1a1a1a" transform="rotate(-24 464.80 260.99)"/><rect x="463.39" y="261.29" width="0.32" height="3.90" fill="#6a6a6a"/><ellipse cx="556.90" cy="256.69" rx="1.15" ry="0.75" fill="none" stroke="#1a1a1a" stroke-width="0.5" transform="rotate(-24 556.90 256.69)"/><rect x="557.94" y="250.69" width="0.32" height="5.70" fill="#4a4a4a"/><ellipse cx="556.90" cy="264.48" rx="1.15" ry="0.75" fill="none" stroke="#1a1a1a" stroke-width="0.5" transform="rotate(-24 556.90 264.48)"/><rect x="555.49" y="264.78" width="0.32" height="3.90" fill="#6a6a6a"/><ellipse cx="589.20" cy="257.71" rx="1.32" ry="0.94" fill="#1a1a1a" transform="rotate(-24 589.20 257.71)"/><rect x="590.24" y="251.71" width="0.32" height="5.70" fill="#4a4a4a"/><ellipse cx="589.20" cy="263.45" rx="1.32" ry="0.94" fill="#1a1a1a" transform="rotate(-24 589.20 263.45)"/><rect x="587.79" y="263.75" width="0.32" height="3.90" fill="#6a6a6a"/><ellipse cx="609.60" cy="257.71" rx="1.32" ry="0.94" fill="#1a1a1a" transform="rotate(-24 609.60 257.71)"/><rect x="610.64" y="251.71" width="0.32" height="5.70" fill="#4a4a4a"/><ellipse cx="609.60" cy="263.45" rx="1.32" ry="0.94" fill="#1a1a1a" transform="rotate(-24 609.60 263.45)"/><rect x="608.19" y="263.75" width="0.32" height="3.90" fill="#6a6a6a"/><ellipse cx="629.60" cy="260.89" rx="1.15" ry="0.75" fill="none" stroke="#1a1a1a" stroke-width="0.5" transform="rotate(-24 629.60 260.89)"/><rect x="630.64" y="254.89" width="0.32" height="5.70" fill="#4a4a4a"/><g fill="#1a1a1a"><rect x="498.10" y="257.15" width="0.9" height="3.6"/><rect x="499.80" y="257.15" width="0.9" height="3.6"/><rect x="498.80" y="257.85" width="1.2" height="0.35"/><rect x="498.80" y="259.70" width="1.2" height="0.35"/></g><g fill="#1a1a1a"><rect x="498.10" y="259.60" width="0.9" height="3.6"/><rect x="499.80" y="259.60" width="0.9" height="3.6"/><rect x="498.80" y="260.30" width="1.2" height="0.35"/><rect x="498.80" y="262.15" width="1.2" height="0.35"/></g><text x="441.00" y="247.90" font-size="5.1" fill="#262626" stroke="#262626" stroke-width="0.05" class="s" textLength="6.20" lengthAdjust="spacingAndGlyphs">Glo</text><text x="454.20" y="247.90" font-size="5.1" fill="#777" stroke="#777" stroke-width="0.05" class="s">-</text><text x="462.20" y="247.90" font-size="5.1" fill="#262626" stroke="#262626" stroke-width="0.05" class="s" textLength="4.10" lengthAdjust="spacingAndGlyphs">ry</text><text x="553.70" y="247.90" font-size="5.1" fill="#262626" stroke="#262626" stroke-width="0.05" class="s" textLength="5.30" lengthAdjust="spacingAndGlyphs">lov</text><text x="572.20" y="247.90" font-size="5.1" fill="#777" stroke="#777" stroke-width="0.05" class="s">-</text><text x="585.70" y="247.90" font-size="5.1" fill="#262626" stroke="#262626" stroke-width="0.05" class="s" textLength="5.70" lengthAdjust="spacingAndGlyphs">est</text><text x="605.10" y="247.90" font-size="5.1" fill="#262626" stroke="#262626" stroke-width="0.05" class="s" textLength="8.20" lengthAdjust="spacingAndGlyphs">man</text><text x="618.40" y="247.90" font-size="5.1" fill="#777" stroke="#777" stroke-width="0.05" class="s">-</text><text x="625.10" y="247.90" font-size="5.1" fill="#262626" stroke="#262626" stroke-width="0.05" class="s" textLength="9.60" lengthAdjust="spacingAndGlyphs">kind!</text><text x="467.20" y="247.90" font-size="5.1" fill="#2a6fd8" stroke="#2a6fd8" stroke-width="0.05" class="s" textLength="64.10" lengthAdjust="spacingAndGlyphs">to Thy dispensation, O Thou Who</text><rect x="656.50" y="226.65" width="0.6" height="0.6" fill="#999"/><rect x="656.50" y="257.65" width="0.6" height="0.6" fill="#999"/></g>
<rect x="0" y="526.8" width="840" height="12.2" fill="#2b2b2b"/><path d="M0 539V536A3 3 0 0 0 3 539Z" fill="#fff"/><path d="M840 539V536.5A2.5 2.5 0 0 1 837.5 539Z" fill="#fff"/>
<text x="1.50" y="536.30" font-size="7.7" fill="#e8e8e8" stroke="#e8e8e8" stroke-width="0.36" textLength="228.00" >Lyrics: to Thy dispensation,...;  Measure: 8; Beat: 3; Staff: 1 (Voice)</text>
<text x="743.20" y="535.70" font-size="7.7" fill="#e8e8e8" stroke="#e8e8e8" stroke-width="0.36" textLength="45.40" >Normal mode</text>
<text x="797.00" y="535.70" font-size="7.7" fill="#e8e8e8" stroke="#e8e8e8" stroke-width="0.36" textLength="29.00" >1:01:000</text>
<g stroke="#6a6a6a" stroke-width="0.7"><path d="M833 538.5L839.5 532M835.5 538.5L839.5 534.5M838 538.5L839.5 537"/></g>
</svg>
</body></html>
